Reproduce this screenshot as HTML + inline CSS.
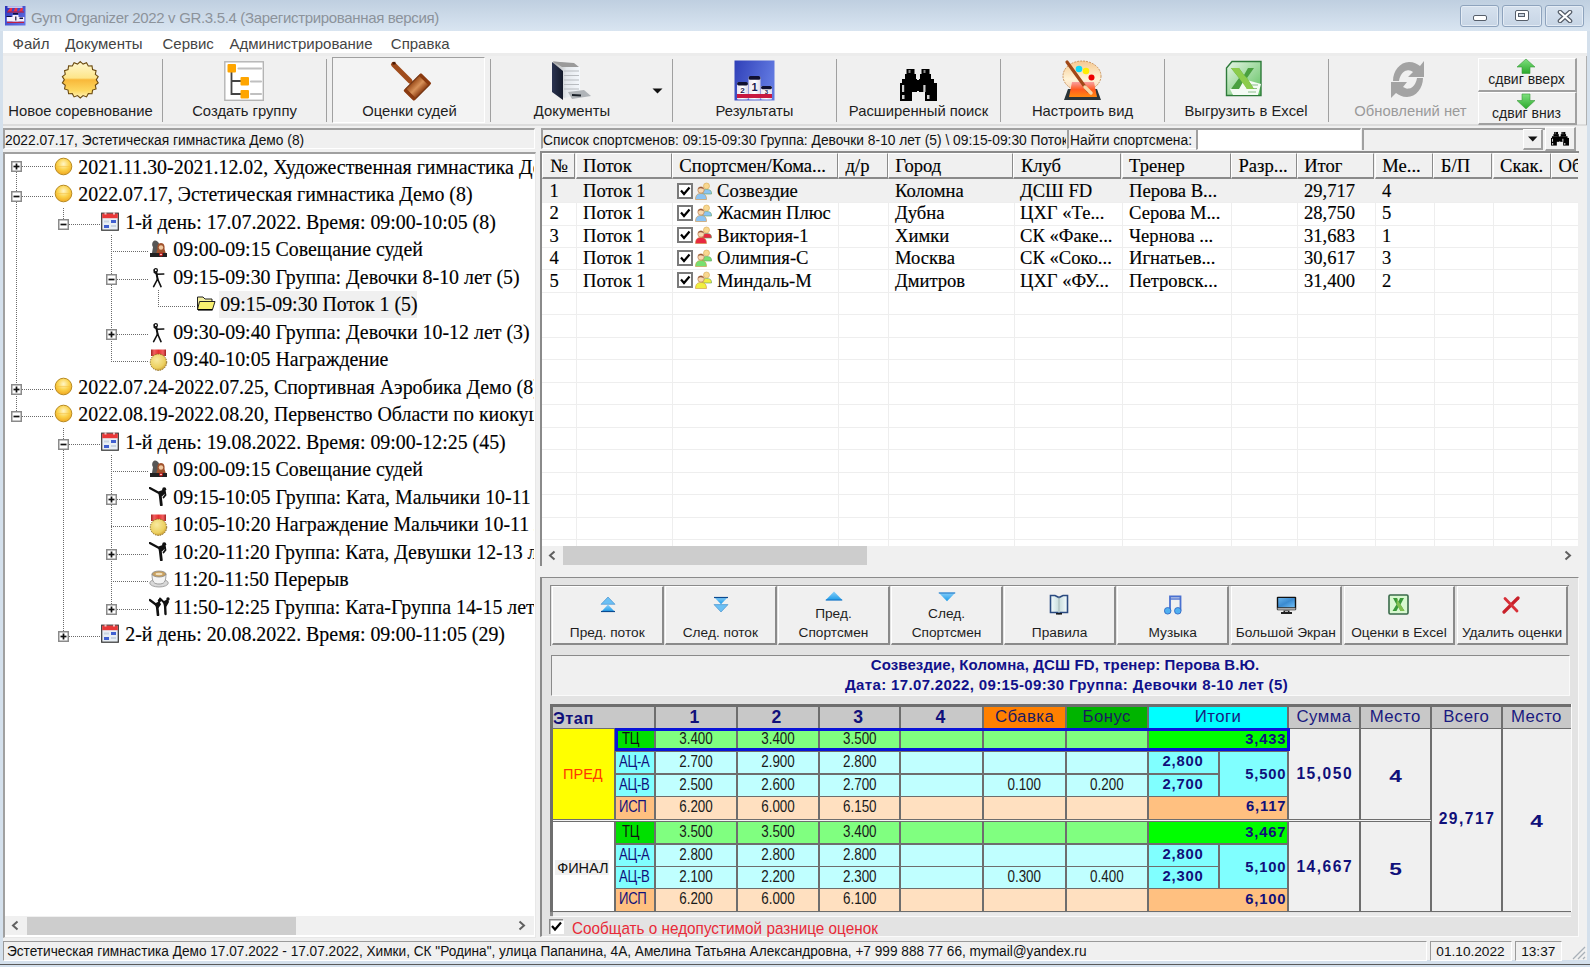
<!DOCTYPE html><html><head><meta charset="utf-8"><style>
*{margin:0;padding:0;box-sizing:border-box}
html,body{width:1590px;height:967px;overflow:hidden;background:#f0f0f0;font-family:"Liberation Sans",sans-serif;position:relative}
.a{position:absolute}
.nw{white-space:nowrap}
</style></head><body><div style="position:absolute;left:0px;top:0px;width:1590px;height:31px;background:linear-gradient(#bfcfe0,#d9e5f1)"></div>
<div style="position:absolute;left:0px;top:31px;width:3px;height:936px;background:#d4e0ec"></div>
<div style="position:absolute;left:1587px;top:31px;width:3px;height:936px;background:#d4e0ec"></div>
<div style="position:absolute;left:0px;top:960px;width:1590px;height:7px;background:#d4e0ec"></div>
<svg class="a" style="left:5px;top:6px" width="21" height="20" viewBox="0 0 21 20"><defs><linearGradient id="ti" x1="0" y1="0" x2="1" y2="1"><stop offset="0" stop-color="#2830b8"/><stop offset="1" stop-color="#6878e8"/></linearGradient></defs><rect x="0" y="0" width="20.5" height="19.5" fill="url(#ti)"/><rect x="2.5" y="0.3" width="15" height="1.5" fill="#e8e8f8"/><path d="M2.5 5.5 L5 2 H7.5 L6.5 5.5 Z M8.5 5.5 L10 2 H12.5 L12 5.5 Z M14 5.5 L16 2 H18 L17.5 5.5 Z" fill="#f03040"/><rect x="2" y="5.5" width="17" height="1" fill="#c01830"/><rect x="8" y="7" width="5" height="1.5" fill="#101040"/><rect x="1.5" y="10" width="5" height="1" fill="#101040"/><rect x="1.8" y="11" width="17.5" height="4.5" fill="#f4f0fc"/><rect x="7.5" y="9" width="6" height="6.5" fill="#f4f0fc"/><rect x="10" y="10.5" width="1.5" height="4" fill="#404060"/><rect x="14.5" y="11.5" width="3.5" height="1.5" fill="#101040"/><rect x="2" y="15.8" width="17" height="1.2" fill="#c02040"/></svg>
<div style="position:absolute;left:31px;top:9px;white-space:nowrap;font-size:15px;letter-spacing:-0.33px;color:#8c939b;line-height:17px">Gym Organizer 2022 v GR.3.5.4 (Зарегистрированная версия)</div>
<div class="a" style="left:1460px;top:5px;width:39px;height:22px;border:1px solid #8ea3bd;border-radius:3px;background:linear-gradient(#d6e1ee,#c7d5e5);box-shadow:inset 0 0 0 1px #e4ecf5"><div class="a" style="left:11.5px;top:8.5px;width:14.5px;height:6.5px;border:1.3px solid #565e6a;border-radius:2px;background:#fff"></div></div>
<div class="a" style="left:1502px;top:5px;width:40px;height:22px;border:1px solid #8ea3bd;border-radius:3px;background:linear-gradient(#d6e1ee,#c7d5e5);box-shadow:inset 0 0 0 1px #e4ecf5"><div class="a" style="left:12px;top:3.5px;width:13.5px;height:11.5px;border:1.3px solid #565e6a;border-radius:2px;background:#fff"><div class="a" style="left:2px;top:2.3px;width:7px;height:4.5px;border:1.2px solid #565e6a;background:#c8d2de"></div></div></div>
<div class="a" style="left:1545px;top:5px;width:39px;height:22px;border:1px solid #8ea3bd;border-radius:3px;background:linear-gradient(#d6e1ee,#c7d5e5);box-shadow:inset 0 0 0 1px #e4ecf5"><svg class="a" style="left:11px;top:3.5px" width="16" height="13" viewBox="0 0 16 13"><path d="M3 2 L13 11 M13 2 L3 11" stroke="#565e6a" stroke-width="4.6" stroke-linecap="round"/><path d="M3 2 L13 11 M13 2 L3 11" stroke="#fff" stroke-width="2.2" stroke-linecap="round"/></svg></div>
<div style="position:absolute;left:3px;top:31px;width:1584px;height:22px;background:#fff"></div>
<div style="position:absolute;left:3px;top:53px;width:1584px;height:3px;background:#ececec"></div>
<div style="position:absolute;left:12.5px;top:35px;white-space:nowrap;font-size:15px;color:#444;line-height:17px">Файл</div>
<div style="position:absolute;left:65.3px;top:35px;white-space:nowrap;font-size:15px;color:#444;line-height:17px">Документы</div>
<div style="position:absolute;left:162.5px;top:35px;white-space:nowrap;font-size:15px;color:#444;line-height:17px">Сервис</div>
<div style="position:absolute;left:229.5px;top:35px;white-space:nowrap;font-size:15px;color:#444;line-height:17px">Администрирование</div>
<div style="position:absolute;left:390.8px;top:35px;white-space:nowrap;font-size:15px;color:#444;line-height:17px">Справка</div>
<div style="position:absolute;left:3px;top:56px;width:1584px;height:69px;background:#f0f0f0"></div>
<div style="position:absolute;left:3px;top:124px;width:1584px;height:2px;background:#dcdcdc"></div>
<div style="position:absolute;left:1586px;top:56px;width:1px;height:69px;background:#b0b0b0"></div>
<div style="position:absolute;left:162px;top:59px;width:1px;height:63px;background:#a0a0a0"></div>
<div style="position:absolute;left:326px;top:59px;width:1px;height:63px;background:#a0a0a0"></div>
<div style="position:absolute;left:490px;top:59px;width:1px;height:63px;background:#a0a0a0"></div>
<div style="position:absolute;left:672px;top:59px;width:1px;height:63px;background:#a0a0a0"></div>
<div style="position:absolute;left:836px;top:59px;width:1px;height:63px;background:#a0a0a0"></div>
<div style="position:absolute;left:1000px;top:59px;width:1px;height:63px;background:#a0a0a0"></div>
<div style="position:absolute;left:1164px;top:59px;width:1px;height:63px;background:#a0a0a0"></div>
<div style="position:absolute;left:1328px;top:59px;width:1px;height:63px;background:#a0a0a0"></div>
<div style="position:absolute;left:332px;top:57px;width:153px;height:66px;border-top:1px solid #a0a0a0;border-left:1px solid #a0a0a0;border-right:1px solid #fff;border-bottom:1px solid #fff;background:#f3f3f3"></div>
<div class="a nw" style="left:-19.5px;top:103px;width:200px;text-align:center;font-size:14.8px;line-height:17px;color:#1e1e1e">Новое соревнование</div>
<div class="a nw" style="left:144.5px;top:103px;width:200px;text-align:center;font-size:14.8px;line-height:17px;color:#1e1e1e">Создать группу</div>
<div class="a nw" style="left:309.5px;top:103px;width:200px;text-align:center;font-size:14.8px;line-height:17px;color:#1e1e1e">Оценки судей</div>
<div class="a nw" style="left:472px;top:103px;width:200px;text-align:center;font-size:14.8px;line-height:17px;color:#1e1e1e">Документы</div>
<div class="a nw" style="left:654.5px;top:103px;width:200px;text-align:center;font-size:14.8px;line-height:17px;color:#1e1e1e">Результаты</div>
<div class="a nw" style="left:818.5px;top:103px;width:200px;text-align:center;font-size:14.8px;line-height:17px;color:#1e1e1e">Расширенный поиск</div>
<div class="a nw" style="left:982.5px;top:103px;width:200px;text-align:center;font-size:14.8px;line-height:17px;color:#1e1e1e">Настроить вид</div>
<div class="a nw" style="left:1146px;top:103px;width:200px;text-align:center;font-size:14.8px;line-height:17px;color:#1e1e1e">Выгрузить в Excel</div>
<div class="a nw" style="left:1310.5px;top:103px;width:200px;text-align:center;font-size:14.8px;line-height:17px;color:#9a9a9a">Обновлений нет</div>
<svg class="a" style="left:60px;top:60px;" width="40" height="40" viewBox="0 0 40 40"><defs><linearGradient id="sg" x1="0" y1="0" x2="0" y2="1">
<stop offset="0" stop-color="#fff8d0"/><stop offset="0.45" stop-color="#fde58a"/><stop offset="0.5" stop-color="#f8b83a"/>
<stop offset="0.8" stop-color="#fdd860"/><stop offset="1" stop-color="#fff4c0"/></linearGradient></defs>
<path d="M20.30,1.60 L23.08,4.04 L26.52,2.70 L28.30,5.94 L32.00,5.86 L32.56,9.52 L36.06,10.70 L35.34,14.33 L38.22,16.64 L36.30,19.80 L38.22,22.96 L35.34,25.27 L36.06,28.90 L32.56,30.08 L32.00,33.74 L28.30,33.66 L26.52,36.90 L23.08,35.56 L20.30,38.00 L17.52,35.56 L14.08,36.90 L12.30,33.66 L8.60,33.74 L8.04,30.08 L4.54,28.90 L5.26,25.27 L2.38,22.96 L4.30,19.80 L2.38,16.64 L5.26,14.33 L4.54,10.70 L8.04,9.52 L8.60,5.86 L12.30,5.94 L14.08,2.70 L17.52,4.04Z" fill="url(#sg)" stroke="#6b4a10" stroke-width="1.1"/></svg>
<svg class="a" style="left:224px;top:61px;" width="40" height="40" viewBox="0 0 40 40"><rect x="0.8" y="0.8" width="38.5" height="38.5" fill="#fff" stroke="#b4b4b4" stroke-width="1.4"/>
<path d="M7.5 11 V33 H17 M7.5 20 H17" stroke="#444" stroke-width="1.8" fill="none"/>
<rect x="3.5" y="3" width="8.5" height="8.5" rx="1" fill="#fea500"/>
<rect x="16.5" y="16" width="8.5" height="8.5" rx="1" fill="#fea500"/>
<rect x="16.5" y="29" width="8.5" height="8.5" rx="1" fill="#fea500"/>
<path d="M14.5 7.5 H37 M27 20.5 H37 M27 33 H37" stroke="#c0c0c0" stroke-width="2.2" stroke-linecap="round"/></svg>
<svg class="a" style="left:388px;top:60px;" width="44" height="42" viewBox="0 0 44 42"><defs><linearGradient id="gv" x1="0" y1="0" x2="0" y2="1"><stop offset="0" stop-color="#9a4a18"/><stop offset="0.5" stop-color="#d8925a"/><stop offset="1" stop-color="#8a3a10"/></linearGradient></defs>
<path d="M5.5 4.5 L22 21" stroke="#a04c1c" stroke-width="5" stroke-linecap="round"/>
<path d="M4.5 3.5 L7.5 3" stroke="#4a1a04" stroke-width="2.5"/>
<g transform="translate(29.4,27) rotate(-45)"><rect x="-11.5" y="-7" width="23" height="14" rx="2.5" fill="url(#gv)" stroke="#6a2a08" stroke-width="1"/>
<rect x="-12.5" y="-7.5" width="3.5" height="15" rx="1.2" fill="#8a3a10"/><rect x="9" y="-7.5" width="3.5" height="15" rx="1.2" fill="#8a3a10"/></g></svg>
<svg class="a" style="left:550px;top:59px;" width="42" height="42" viewBox="0 0 42 42"><defs><linearGradient id="dk" x1="0" y1="0" x2="1" y2="0"><stop offset="0" stop-color="#2a3350"/><stop offset="1" stop-color="#141a2a"/></linearGradient><linearGradient id="pp" x1="0" y1="0" x2="1" y2="0"><stop offset="0" stop-color="#a8a8a8"/><stop offset="0.5" stop-color="#e4e8ec"/><stop offset="1" stop-color="#f4f8fc"/></linearGradient></defs><path d="M3 2.5 L24 4 L30 8 L30 36 L14 39 L9 34 Z" fill="url(#pp)"/><path d="M3 2.5 L24 4 L29 8 L12 8 Z" fill="#9a9a9a"/><path d="M14 12 H29 M14 16.5 H29 M14 21 H29 M14 25.5 H29 M14 30 H29" stroke="#b8bcc0" stroke-width="1.2"/><path d="M2 3 L13 12 L13 41 L2 33 Z" fill="url(#dk)"/><path d="M18 33 L34 31 L41 37 L22 40 Z" fill="#b0b4b8"/><path d="M22 36 L31 36.5" stroke="#1a2028" stroke-width="2"/></svg>
<svg class="a" style="left:652px;top:88px;" width="11" height="6" viewBox="0 0 11 6"><path d="M0.5 0.5 H10.5 L5.5 5.5 Z" fill="#111"/></svg>
<svg class="a" style="left:734px;top:60px;" width="41" height="41" viewBox="0 0 41 41"><defs><linearGradient id="pb" x1="0" y1="0" x2="1" y2="0.3"><stop offset="0" stop-color="#3040b8"/><stop offset="1" stop-color="#6078e0"/></linearGradient>
<linearGradient id="pw" x1="0" y1="0" x2="1" y2="0"><stop offset="0" stop-color="#e8e4f0"/><stop offset="0.5" stop-color="#ffffff"/><stop offset="1" stop-color="#dcd8e8"/></linearGradient></defs>
<rect x="0.5" y="0.5" width="40" height="40" fill="url(#pb)"/>
<rect x="3" y="22.5" width="11" height="17" rx="1" fill="url(#pw)"/><rect x="3" y="22" width="11" height="3.5" rx="1.7" fill="#101030"/>
<rect x="14.5" y="16.5" width="12" height="23" rx="1" fill="url(#pw)"/><rect x="14.5" y="16" width="12" height="3.8" rx="1.9" fill="#101030"/>
<rect x="27" y="26" width="11" height="13.5" rx="1" fill="url(#pw)"/><rect x="27" y="26" width="11" height="3.2" rx="1.6" fill="#101030"/>
<rect x="3" y="34" width="35" height="4" fill="#c81840"/>
<text x="8.5" y="33" font-family="Liberation Sans" font-weight="bold" font-size="8" fill="#1a1a50" text-anchor="middle">2</text>
<text x="20.5" y="31" font-family="Liberation Sans" font-weight="bold" font-size="11" fill="#1a1a50" text-anchor="middle">1</text>
<text x="32.5" y="34" font-family="Liberation Sans" font-weight="bold" font-size="6" fill="#1a1a50" text-anchor="middle">3</text></svg>
<svg class="a" style="left:900px;top:62px;" width="37" height="40" viewBox="0 0 37 40"><g fill="#000">
<rect x="6.5" y="7" width="8" height="5"/><rect x="21.5" y="7" width="8" height="5"/>
<rect x="5" y="12" width="11" height="5"/><rect x="20" y="12" width="11" height="5"/>
<rect x="2" y="17" width="15" height="13"/><rect x="19" y="17" width="15" height="13"/>
<rect x="0" y="21" width="12" height="18"/><rect x="25" y="21" width="12" height="18"/>
<rect x="12" y="18" width="13" height="11"/></g>
<g fill="#cfcfcf"><rect x="2" y="23" width="2.2" height="7"/><rect x="23.3" y="23" width="2.2" height="7"/><rect x="2" y="33" width="2.5" height="4"/><rect x="27" y="33" width="2.5" height="4"/>
<rect x="8.5" y="8" width="2" height="3" fill="#888"/><rect x="23.5" y="8" width="2" height="3" fill="#888"/></g></svg>
<svg class="a" style="left:1061px;top:59px;" width="42" height="43" viewBox="0 0 42 43"><defs><linearGradient id="pl" x1="0" y1="0" x2="0" y2="1"><stop offset="0" stop-color="#f6c890"/><stop offset="0.6" stop-color="#fff4d8"/><stop offset="1" stop-color="#f8d0b0"/></linearGradient>
<linearGradient id="po" x1="0" y1="0" x2="0" y2="1"><stop offset="0" stop-color="#f8a0a0"/><stop offset="0.5" stop-color="#ff5a20"/><stop offset="1" stop-color="#ff8a10"/></linearGradient></defs>
<ellipse cx="21" cy="17" rx="19" ry="15" fill="url(#pl)" stroke="#c08040" stroke-width="0.8" stroke-dasharray="2 1"/>
<circle cx="18" cy="10" r="3.3" fill="#10d8f8"/><circle cx="25" cy="12" r="3.3" fill="#ffee00"/><circle cx="30.5" cy="18.5" r="3" fill="#ee0000"/>
<path d="M3 41 L7 30 H36 L40 41 Z" fill="#2a3438"/>
<path d="M8 38 L11 23 H33 L36 38 Z" fill="url(#po)"/>
<path d="M6 3 L27 32" stroke="#a04818" stroke-width="3.2" stroke-linecap="round"/>
<path d="M24 28 L30 34" stroke="#f8d8a8" stroke-width="3.5" stroke-linecap="round"/></svg>
<svg class="a" style="left:1225px;top:60px;" width="38" height="38" viewBox="0 0 38 38"><defs><linearGradient id="xg" x1="0" y1="0" x2="1" y2="1"><stop offset="0" stop-color="#e8f6e8"/><stop offset="1" stop-color="#5cc05c"/></linearGradient></defs>
<path d="M7 1.5 H36 V35.5 H1.5 V8 Z" fill="url(#xg)" stroke="#2e7a3a" stroke-width="1.4"/>
<path d="M22 20 L36 24 L33 35 L8 35 L5 29 Z" fill="#f4fbf4"/>
<path d="M25 25 H33 M24 28.5 H32 M23 32 H31" stroke="#8cc08c" stroke-width="1.2"/>
<path d="M6 8 L14 8 L19 15 L23 8 L29 8 L22 18 L29 29 L22 29 L18 22 L14 29 L6 29 L14 18 Z" fill="#4aa040"/>
<path d="M14 8 L19 15 L22 18 L29 29 L22 29 L14 18 L6 8 Z" fill="#8ccc4c"/></svg>
<svg class="a" style="left:1388px;top:59px;" width="40" height="41" viewBox="0 0 40 41"><g fill="#a3a3a3">
<path d="M5 22 C5 12 12 3 21 3 C26 3 29 5 32 7 L36 2 V18 H20 L25 13 C23 12 22 11 19 11.5 C15 12 12 16 11 22 Z"/>
<path d="M35 19 C35 29 28 38 19 38 C14 38 11 36 8 34 L3 39 V23 H19 L15 28 C17 29 18 30 21 29.5 C25 29 28 25 29 19 Z"/>
</g></svg>
<div style="position:absolute;left:1478px;top:58px;width:99px;height:34px;background:#f0f0f0;border-top:1px solid #fff;border-left:1px solid #fff;border-right:2px solid #a0a0a0;border-bottom:2px solid #a0a0a0"></div>
<div style="position:absolute;left:1478px;top:92px;width:99px;height:33px;background:#f0f0f0;border-top:1px solid #fff;border-left:1px solid #fff;border-right:2px solid #a0a0a0;border-bottom:2px solid #a0a0a0"></div>
<svg class="a" style="left:1516px;top:58px;" width="20" height="17" viewBox="0 0 20 17"><defs><linearGradient id="ga" x1="0" y1="0" x2="0" y2="1"><stop offset="0" stop-color="#7fe07f"/><stop offset="1" stop-color="#2aa82a"/></linearGradient></defs><path d="M10 1 L19 9 H14 V15.5 H6 V9 H1 Z" fill="url(#ga)" stroke="#3a9a3a" stroke-width="0.6"/></svg>
<svg class="a" style="left:1516px;top:93px;" width="20" height="17" viewBox="0 0 20 17"><defs><linearGradient id="gb" x1="0" y1="0" x2="0" y2="1"><stop offset="0" stop-color="#7fe07f"/><stop offset="1" stop-color="#2aa82a"/></linearGradient></defs><path d="M6 1 H14 V7.5 H19 L10 16 L1 7.5 H6 Z" fill="url(#gb)" stroke="#3a9a3a" stroke-width="0.6"/></svg>
<div style="position:absolute;left:1478px;top:71px;white-space:nowrap;font-size:14px;color:#1e1e1e;line-height:16px"><div style="width:97px;text-align:center">сдвиг вверх</div></div>
<div style="position:absolute;left:1478px;top:105px;white-space:nowrap;font-size:14px;color:#1e1e1e;line-height:16px"><div style="width:97px;text-align:center">сдвиг вниз</div></div>
<div class="a" style="left:3px;top:127.5px;width:532px;height:21px;background:#f0f0f0;border-top:2px solid #a0a0a0;border-left:2px solid #a0a0a0;border-right:1px solid #fff;border-bottom:1px solid #fff;"></div>
<div class="a nw" style="left:5px;top:130.55px;height:19px;line-height:19px;font-size:13.8px;font-family:'Liberation Sans', sans-serif;color:#111;transform:scaleY(1.08);transform-origin:0 80%">2022.07.17, Эстетическая гимнастика Демо (8)</div>
<div style="position:absolute;left:3px;top:151.5px;width:533px;height:786px;background:#fff;border-top:2px solid #a0a0a0;border-left:2px solid #a0a0a0;border-right:1px solid #e8e8e8;border-bottom:1px solid #e8e8e8;overflow:hidden"></div>
<div class="a" style="left:5px;top:153.5px;width:529px;height:762px;overflow:hidden">
<div class="a" style="left:11.00px;top:18.50px;width:1px;height:244.00px;background:repeating-linear-gradient(#6a6a6a 0 1px,transparent 1px 2px)"></div>
<div class="a" style="left:58.00px;top:54.50px;width:1px;height:16.00px;background:repeating-linear-gradient(#6a6a6a 0 1px,transparent 1px 2px)"></div>
<div class="a" style="left:58.00px;top:274.50px;width:1px;height:208.00px;background:repeating-linear-gradient(#6a6a6a 0 1px,transparent 1px 2px)"></div>
<div class="a" style="left:106.00px;top:81.50px;width:1px;height:126.00px;background:repeating-linear-gradient(#6a6a6a 0 1px,transparent 1px 2px)"></div>
<div class="a" style="left:106.00px;top:301.50px;width:1px;height:154.00px;background:repeating-linear-gradient(#6a6a6a 0 1px,transparent 1px 2px)"></div>
<div class="a" style="left:153.00px;top:136.50px;width:1px;height:16.00px;background:repeating-linear-gradient(#6a6a6a 0 1px,transparent 1px 2px)"></div>
<div class="a" style="left:214.3px;top:137.30px;width:198px;height:27px;background:#f0f0f0"></div>
<div class="a" style="left:11.00px;top:12.50px;width:37.00px;height:1px;background:repeating-linear-gradient(90deg,#6a6a6a 0 1px,transparent 1px 2px)"></div>
<svg class="a" style="left:6.00px;top:7.50px" width="11" height="11" viewBox="0 0 11 11"><rect x="0.75" y="0.75" width="9.5" height="9.5" fill="#fff" stroke="#8a8a8a" stroke-width="1.5"/><path d="M2.5 5.5 H8.5" stroke="#111" stroke-width="1.7"/><path d="M5.5 2.5 V8.5" stroke="#111" stroke-width="1.7"/></svg>
<svg class="a" style="left:49px;top:3.3px;" width="19" height="19" viewBox="0 0 19 19"><defs><radialGradient id="ts" cx="0.5" cy="0.35" r="0.65"><stop offset="0" stop-color="#fff6c8"/><stop offset="0.55" stop-color="#fbd24a"/><stop offset="1" stop-color="#f0a820"/></radialGradient></defs><circle cx="9.5" cy="9.5" r="8.3" fill="url(#ts)" stroke="#b88a20" stroke-width="1"/><path d="M2 9.5 H17" stroke="#f6c040" stroke-width="0.8" opacity="0.6"/></svg>
<div class="a nw" style="left:73.3px;top:-0.77px;height:28px;line-height:28px;font-size:19.9px;font-family:'Liberation Serif', serif;color:#000;-webkit-text-stroke:0.15px #000">2021.11.30-2021.12.02, Художественная гимнастика Демо (12)</div>
<div class="a" style="left:11.00px;top:42.50px;width:37.00px;height:1px;background:repeating-linear-gradient(90deg,#6a6a6a 0 1px,transparent 1px 2px)"></div>
<svg class="a" style="left:6.00px;top:37.50px" width="11" height="11" viewBox="0 0 11 11"><rect x="0.75" y="0.75" width="9.5" height="9.5" fill="#fff" stroke="#8a8a8a" stroke-width="1.5"/><path d="M2.5 5.5 H8.5" stroke="#111" stroke-width="1.7"/></svg>
<svg class="a" style="left:49px;top:30.8px;" width="19" height="19" viewBox="0 0 19 19"><defs><radialGradient id="ts" cx="0.5" cy="0.35" r="0.65"><stop offset="0" stop-color="#fff6c8"/><stop offset="0.55" stop-color="#fbd24a"/><stop offset="1" stop-color="#f0a820"/></radialGradient></defs><circle cx="9.5" cy="9.5" r="8.3" fill="url(#ts)" stroke="#b88a20" stroke-width="1"/><path d="M2 9.5 H17" stroke="#f6c040" stroke-width="0.8" opacity="0.6"/></svg>
<div class="a nw" style="left:73.3px;top:26.73px;height:28px;line-height:28px;font-size:19.9px;font-family:'Liberation Serif', serif;color:#000;-webkit-text-stroke:0.15px #000">2022.07.17, Эстетическая гимнастика Демо (8)</div>
<div class="a" style="left:58.00px;top:70.50px;width:37.00px;height:1px;background:repeating-linear-gradient(90deg,#6a6a6a 0 1px,transparent 1px 2px)"></div>
<svg class="a" style="left:53.00px;top:65.50px" width="11" height="11" viewBox="0 0 11 11"><rect x="0.75" y="0.75" width="9.5" height="9.5" fill="#fff" stroke="#8a8a8a" stroke-width="1.5"/><path d="M2.5 5.5 H8.5" stroke="#111" stroke-width="1.7"/></svg>
<svg class="a" style="left:96px;top:58.3px;" width="18" height="19" viewBox="0 0 18 19"><rect x="0.7" y="1.2" width="16.6" height="17" fill="#e8eef4" stroke="#333" stroke-width="1.2"/><rect x="1.2" y="1.6" width="15.6" height="4.6" fill="#e83838"/><rect x="3.5" y="0" width="2" height="2.6" fill="#e8c0c0"/><rect x="12" y="0" width="2" height="2.6" fill="#e8c0c0"/><rect x="10" y="8" width="5" height="3" fill="#4060d0"/><rect x="3" y="13" width="5" height="3" fill="#4060d0"/><rect x="3" y="8.5" width="5" height="2" fill="#c8d4e0"/><rect x="10" y="13" width="5" height="2" fill="#c8d4e0"/></svg>
<div class="a nw" style="left:120.3px;top:54.23px;height:28px;line-height:28px;font-size:19.9px;font-family:'Liberation Serif', serif;color:#000;-webkit-text-stroke:0.15px #000">1-й день: 17.07.2022. Время: 09:00-10:05 (8)</div>
<div class="a" style="left:106.00px;top:97.50px;width:37.00px;height:1px;background:repeating-linear-gradient(90deg,#6a6a6a 0 1px,transparent 1px 2px)"></div>
<svg class="a" style="left:144px;top:85.8px;" width="19" height="19" viewBox="0 0 19 19"><path d="M6 1.5 C3 2 2.5 6 4 8 L3 14 H11 L10 8 C11 6 10 2 6 1.5Z" fill="#555"/><path d="M12 4 C9 4 8 7 8.5 10 L7 15 H17 L15.5 10 C16 7 15 4 12 4Z" fill="#a0522d"/><circle cx="12" cy="8.5" r="2.2" fill="#f0c8a0"/><path d="M1 14 H18 V18 H1Z" fill="#222"/><circle cx="12" cy="15.5" r="2" fill="#c01818"/><circle cx="12" cy="15.5" r="0.8" fill="#fff"/></svg>
<div class="a nw" style="left:168.3px;top:81.73px;height:28px;line-height:28px;font-size:19.9px;font-family:'Liberation Serif', serif;color:#000;-webkit-text-stroke:0.15px #000">09:00-09:15 Совещание судей</div>
<div class="a" style="left:106.00px;top:125.50px;width:37.00px;height:1px;background:repeating-linear-gradient(90deg,#6a6a6a 0 1px,transparent 1px 2px)"></div>
<svg class="a" style="left:101.00px;top:120.50px" width="11" height="11" viewBox="0 0 11 11"><rect x="0.75" y="0.75" width="9.5" height="9.5" fill="#fff" stroke="#8a8a8a" stroke-width="1.5"/><path d="M2.5 5.5 H8.5" stroke="#111" stroke-width="1.7"/></svg>
<svg class="a" style="left:144px;top:113.3px;" width="19" height="21" viewBox="0 0 19 21"><g stroke="#111" fill="none" stroke-linecap="round" stroke-linejoin="round"><circle cx="6.8" cy="3.3" r="1.6" stroke-width="1.3"/><path d="M7.3 5.3 L8.6 12.2" stroke-width="2"/><path d="M7.6 7.3 L14.8 7" stroke-width="1.5"/><path d="M7.4 6.6 L5.2 5.3 L5.3 2.5" stroke-width="1.4"/><path d="M8.6 12 L4.6 19.6 M8.6 12 L12 19.6" stroke-width="1.6"/></g></svg>
<div class="a nw" style="left:168.3px;top:109.23px;height:28px;line-height:28px;font-size:19.9px;font-family:'Liberation Serif', serif;color:#000;-webkit-text-stroke:0.15px #000">09:15-09:30 Группа: Девочки 8-10 лет (5)</div>
<div class="a" style="left:153.00px;top:152.50px;width:37.00px;height:1px;background:repeating-linear-gradient(90deg,#6a6a6a 0 1px,transparent 1px 2px)"></div>
<svg class="a" style="left:191px;top:140.8px;" width="20" height="17" viewBox="0 0 20 17"><path d="M1.5 3 H7 L9 5 H16 V15.5 H1.5 Z" fill="#f4f0a0" stroke="#222" stroke-width="1"/><path d="M3.5 7.5 H19 L16.5 15.5 H1.5 Z" fill="#f8f070" stroke="#222" stroke-width="1"/><path d="M16.5 15.8 H2" stroke="#000" stroke-width="1.6"/></svg>
<div class="a nw" style="left:215.3px;top:136.73px;height:28px;line-height:28px;font-size:19.9px;font-family:'Liberation Serif', serif;color:#000;-webkit-text-stroke:0.15px #000">09:15-09:30 Поток 1 (5)</div>
<div class="a" style="left:106.00px;top:180.50px;width:37.00px;height:1px;background:repeating-linear-gradient(90deg,#6a6a6a 0 1px,transparent 1px 2px)"></div>
<svg class="a" style="left:101.00px;top:175.50px" width="11" height="11" viewBox="0 0 11 11"><rect x="0.75" y="0.75" width="9.5" height="9.5" fill="#fff" stroke="#8a8a8a" stroke-width="1.5"/><path d="M2.5 5.5 H8.5" stroke="#111" stroke-width="1.7"/><path d="M5.5 2.5 V8.5" stroke="#111" stroke-width="1.7"/></svg>
<svg class="a" style="left:144px;top:168.3px;" width="19" height="21" viewBox="0 0 19 21"><g stroke="#111" fill="none" stroke-linecap="round" stroke-linejoin="round"><circle cx="6.8" cy="3.3" r="1.6" stroke-width="1.3"/><path d="M7.3 5.3 L8.6 12.2" stroke-width="2"/><path d="M7.6 7.3 L14.8 7" stroke-width="1.5"/><path d="M7.4 6.6 L5.2 5.3 L5.3 2.5" stroke-width="1.4"/><path d="M8.6 12 L4.6 19.6 M8.6 12 L12 19.6" stroke-width="1.6"/></g></svg>
<div class="a nw" style="left:168.3px;top:164.23px;height:28px;line-height:28px;font-size:19.9px;font-family:'Liberation Serif', serif;color:#000;-webkit-text-stroke:0.15px #000">09:30-09:40 Группа: Девочки 10-12 лет (3)</div>
<div class="a" style="left:106.00px;top:207.50px;width:37.00px;height:1px;background:repeating-linear-gradient(90deg,#6a6a6a 0 1px,transparent 1px 2px)"></div>
<svg class="a" style="left:144px;top:195.3px;" width="19" height="22" viewBox="0 0 19 22"><defs><linearGradient id="rb" x1="0" y1="0" x2="1" y2="0"><stop offset="0" stop-color="#a02020"/><stop offset="0.2" stop-color="#f06060"/><stop offset="0.5" stop-color="#e83030"/><stop offset="0.8" stop-color="#f06060"/><stop offset="1" stop-color="#a02020"/></linearGradient><radialGradient id="md" cx="0.4" cy="0.35" r="0.7"><stop offset="0" stop-color="#f8eaa0"/><stop offset="0.7" stop-color="#ecd060"/><stop offset="1" stop-color="#c89a30"/></radialGradient></defs><rect x="2" y="0.5" width="15" height="6.5" fill="url(#rb)"/><path d="M4 6.5 H15 L13 9 H6Z" fill="#f08040"/><circle cx="9.5" cy="13.2" r="8.2" fill="url(#md)" stroke="#8a6a20" stroke-width="1" stroke-dasharray="1.5 1"/></svg>
<div class="a nw" style="left:168.3px;top:191.73px;height:28px;line-height:28px;font-size:19.9px;font-family:'Liberation Serif', serif;color:#000;-webkit-text-stroke:0.15px #000">09:40-10:05 Награждение</div>
<div class="a" style="left:11.00px;top:235.50px;width:37.00px;height:1px;background:repeating-linear-gradient(90deg,#6a6a6a 0 1px,transparent 1px 2px)"></div>
<svg class="a" style="left:6.00px;top:230.50px" width="11" height="11" viewBox="0 0 11 11"><rect x="0.75" y="0.75" width="9.5" height="9.5" fill="#fff" stroke="#8a8a8a" stroke-width="1.5"/><path d="M2.5 5.5 H8.5" stroke="#111" stroke-width="1.7"/><path d="M5.5 2.5 V8.5" stroke="#111" stroke-width="1.7"/></svg>
<svg class="a" style="left:49px;top:223.3px;" width="19" height="19" viewBox="0 0 19 19"><defs><radialGradient id="ts" cx="0.5" cy="0.35" r="0.65"><stop offset="0" stop-color="#fff6c8"/><stop offset="0.55" stop-color="#fbd24a"/><stop offset="1" stop-color="#f0a820"/></radialGradient></defs><circle cx="9.5" cy="9.5" r="8.3" fill="url(#ts)" stroke="#b88a20" stroke-width="1"/><path d="M2 9.5 H17" stroke="#f6c040" stroke-width="0.8" opacity="0.6"/></svg>
<div class="a nw" style="left:73.3px;top:219.23px;height:28px;line-height:28px;font-size:19.9px;font-family:'Liberation Serif', serif;color:#000;-webkit-text-stroke:0.15px #000">2022.07.24-2022.07.25, Спортивная Аэробика Демо (8)</div>
<div class="a" style="left:11.00px;top:262.50px;width:37.00px;height:1px;background:repeating-linear-gradient(90deg,#6a6a6a 0 1px,transparent 1px 2px)"></div>
<svg class="a" style="left:6.00px;top:257.50px" width="11" height="11" viewBox="0 0 11 11"><rect x="0.75" y="0.75" width="9.5" height="9.5" fill="#fff" stroke="#8a8a8a" stroke-width="1.5"/><path d="M2.5 5.5 H8.5" stroke="#111" stroke-width="1.7"/></svg>
<svg class="a" style="left:49px;top:250.8px;" width="19" height="19" viewBox="0 0 19 19"><defs><radialGradient id="ts" cx="0.5" cy="0.35" r="0.65"><stop offset="0" stop-color="#fff6c8"/><stop offset="0.55" stop-color="#fbd24a"/><stop offset="1" stop-color="#f0a820"/></radialGradient></defs><circle cx="9.5" cy="9.5" r="8.3" fill="url(#ts)" stroke="#b88a20" stroke-width="1"/><path d="M2 9.5 H17" stroke="#f6c040" stroke-width="0.8" opacity="0.6"/></svg>
<div class="a nw" style="left:73.3px;top:246.73px;height:28px;line-height:28px;font-size:19.9px;font-family:'Liberation Serif', serif;color:#000;-webkit-text-stroke:0.15px #000">2022.08.19-2022.08.20, Первенство Области по киокушинкай (45)</div>
<div class="a" style="left:58.00px;top:290.50px;width:37.00px;height:1px;background:repeating-linear-gradient(90deg,#6a6a6a 0 1px,transparent 1px 2px)"></div>
<svg class="a" style="left:53.00px;top:285.50px" width="11" height="11" viewBox="0 0 11 11"><rect x="0.75" y="0.75" width="9.5" height="9.5" fill="#fff" stroke="#8a8a8a" stroke-width="1.5"/><path d="M2.5 5.5 H8.5" stroke="#111" stroke-width="1.7"/></svg>
<svg class="a" style="left:96px;top:278.3px;" width="18" height="19" viewBox="0 0 18 19"><rect x="0.7" y="1.2" width="16.6" height="17" fill="#e8eef4" stroke="#333" stroke-width="1.2"/><rect x="1.2" y="1.6" width="15.6" height="4.6" fill="#e83838"/><rect x="3.5" y="0" width="2" height="2.6" fill="#e8c0c0"/><rect x="12" y="0" width="2" height="2.6" fill="#e8c0c0"/><rect x="10" y="8" width="5" height="3" fill="#4060d0"/><rect x="3" y="13" width="5" height="3" fill="#4060d0"/><rect x="3" y="8.5" width="5" height="2" fill="#c8d4e0"/><rect x="10" y="13" width="5" height="2" fill="#c8d4e0"/></svg>
<div class="a nw" style="left:120.3px;top:274.23px;height:28px;line-height:28px;font-size:19.9px;font-family:'Liberation Serif', serif;color:#000;-webkit-text-stroke:0.15px #000">1-й день: 19.08.2022. Время: 09:00-12:25 (45)</div>
<div class="a" style="left:106.00px;top:317.50px;width:37.00px;height:1px;background:repeating-linear-gradient(90deg,#6a6a6a 0 1px,transparent 1px 2px)"></div>
<svg class="a" style="left:144px;top:305.8px;" width="19" height="19" viewBox="0 0 19 19"><path d="M6 1.5 C3 2 2.5 6 4 8 L3 14 H11 L10 8 C11 6 10 2 6 1.5Z" fill="#555"/><path d="M12 4 C9 4 8 7 8.5 10 L7 15 H17 L15.5 10 C16 7 15 4 12 4Z" fill="#a0522d"/><circle cx="12" cy="8.5" r="2.2" fill="#f0c8a0"/><path d="M1 14 H18 V18 H1Z" fill="#222"/><circle cx="12" cy="15.5" r="2" fill="#c01818"/><circle cx="12" cy="15.5" r="0.8" fill="#fff"/></svg>
<div class="a nw" style="left:168.3px;top:301.73px;height:28px;line-height:28px;font-size:19.9px;font-family:'Liberation Serif', serif;color:#000;-webkit-text-stroke:0.15px #000">09:00-09:15 Совещание судей</div>
<div class="a" style="left:106.00px;top:345.50px;width:37.00px;height:1px;background:repeating-linear-gradient(90deg,#6a6a6a 0 1px,transparent 1px 2px)"></div>
<svg class="a" style="left:101.00px;top:340.50px" width="11" height="11" viewBox="0 0 11 11"><rect x="0.75" y="0.75" width="9.5" height="9.5" fill="#fff" stroke="#8a8a8a" stroke-width="1.5"/><path d="M2.5 5.5 H8.5" stroke="#111" stroke-width="1.7"/><path d="M5.5 2.5 V8.5" stroke="#111" stroke-width="1.7"/></svg>
<svg class="a" style="left:144px;top:333.3px;" width="19" height="19" viewBox="0 0 19 19"><g stroke="#111" stroke-linecap="round" fill="none"><path d="M0.8 1 L11 6.5" stroke-width="2.2"/><path d="M11 6.5 L12.3 17.8" stroke-width="2.8"/><path d="M15.8 4.5 L16.5 8 L14.5 10.5" stroke-width="1.8"/></g><path d="M9.5 4.5 L15 2.5 L17 5.5 L13 9.5 L10 9 Z" fill="#111"/><circle cx="15.2" cy="2.3" r="2" fill="#111"/></svg>
<div class="a nw" style="left:168.3px;top:329.23px;height:28px;line-height:28px;font-size:19.9px;font-family:'Liberation Serif', serif;color:#000;-webkit-text-stroke:0.15px #000">09:15-10:05 Группа: Ката, Мальчики 10-11 лет (10)</div>
<div class="a" style="left:106.00px;top:372.50px;width:37.00px;height:1px;background:repeating-linear-gradient(90deg,#6a6a6a 0 1px,transparent 1px 2px)"></div>
<svg class="a" style="left:144px;top:360.3px;" width="19" height="22" viewBox="0 0 19 22"><defs><linearGradient id="rb" x1="0" y1="0" x2="1" y2="0"><stop offset="0" stop-color="#a02020"/><stop offset="0.2" stop-color="#f06060"/><stop offset="0.5" stop-color="#e83030"/><stop offset="0.8" stop-color="#f06060"/><stop offset="1" stop-color="#a02020"/></linearGradient><radialGradient id="md" cx="0.4" cy="0.35" r="0.7"><stop offset="0" stop-color="#f8eaa0"/><stop offset="0.7" stop-color="#ecd060"/><stop offset="1" stop-color="#c89a30"/></radialGradient></defs><rect x="2" y="0.5" width="15" height="6.5" fill="url(#rb)"/><path d="M4 6.5 H15 L13 9 H6Z" fill="#f08040"/><circle cx="9.5" cy="13.2" r="8.2" fill="url(#md)" stroke="#8a6a20" stroke-width="1" stroke-dasharray="1.5 1"/></svg>
<div class="a nw" style="left:168.3px;top:356.73px;height:28px;line-height:28px;font-size:19.9px;font-family:'Liberation Serif', serif;color:#000;-webkit-text-stroke:0.15px #000">10:05-10:20 Награждение Мальчики 10-11 лет</div>
<div class="a" style="left:106.00px;top:400.50px;width:37.00px;height:1px;background:repeating-linear-gradient(90deg,#6a6a6a 0 1px,transparent 1px 2px)"></div>
<svg class="a" style="left:101.00px;top:395.50px" width="11" height="11" viewBox="0 0 11 11"><rect x="0.75" y="0.75" width="9.5" height="9.5" fill="#fff" stroke="#8a8a8a" stroke-width="1.5"/><path d="M2.5 5.5 H8.5" stroke="#111" stroke-width="1.7"/><path d="M5.5 2.5 V8.5" stroke="#111" stroke-width="1.7"/></svg>
<svg class="a" style="left:144px;top:388.3px;" width="19" height="19" viewBox="0 0 19 19"><g stroke="#111" stroke-linecap="round" fill="none"><path d="M0.8 1 L11 6.5" stroke-width="2.2"/><path d="M11 6.5 L12.3 17.8" stroke-width="2.8"/><path d="M15.8 4.5 L16.5 8 L14.5 10.5" stroke-width="1.8"/></g><path d="M9.5 4.5 L15 2.5 L17 5.5 L13 9.5 L10 9 Z" fill="#111"/><circle cx="15.2" cy="2.3" r="2" fill="#111"/></svg>
<div class="a nw" style="left:168.3px;top:384.23px;height:28px;line-height:28px;font-size:19.9px;font-family:'Liberation Serif', serif;color:#000;-webkit-text-stroke:0.15px #000">10:20-11:20 Группа: Ката, Девушки 12-13 лет (12)</div>
<div class="a" style="left:106.00px;top:427.50px;width:37.00px;height:1px;background:repeating-linear-gradient(90deg,#6a6a6a 0 1px,transparent 1px 2px)"></div>
<svg class="a" style="left:144px;top:415.8px;" width="20" height="19" viewBox="0 0 20 19"><ellipse cx="10" cy="14" rx="9.3" ry="4" fill="#d8d8d8" stroke="#909090" stroke-width="0.8"/><path d="M3 5 C3 13 5 15 10 15 C15 15 17 13 17 5 Z" fill="#f4f4f4" stroke="#888" stroke-width="0.8"/><ellipse cx="10" cy="5" rx="7" ry="3" fill="#c8a060" stroke="#888" stroke-width="0.8"/><ellipse cx="10" cy="5" rx="3.5" ry="1.2" fill="#f0e0c0"/></svg>
<div class="a nw" style="left:168.3px;top:411.73px;height:28px;line-height:28px;font-size:19.9px;font-family:'Liberation Serif', serif;color:#000;-webkit-text-stroke:0.15px #000">11:20-11:50 Перерыв</div>
<div class="a" style="left:106.00px;top:455.50px;width:37.00px;height:1px;background:repeating-linear-gradient(90deg,#6a6a6a 0 1px,transparent 1px 2px)"></div>
<svg class="a" style="left:101.00px;top:450.50px" width="11" height="11" viewBox="0 0 11 11"><rect x="0.75" y="0.75" width="9.5" height="9.5" fill="#fff" stroke="#8a8a8a" stroke-width="1.5"/><path d="M2.5 5.5 H8.5" stroke="#111" stroke-width="1.7"/><path d="M5.5 2.5 V8.5" stroke="#111" stroke-width="1.7"/></svg>
<svg class="a" style="left:144px;top:443.3px;" width="21" height="19" viewBox="0 0 21 19"><g stroke="#111" stroke-linecap="round" fill="none"><path d="M0.8 3 L7.5 8" stroke-width="2.2"/><path d="M8 8 L9 18" stroke-width="2.6"/><path d="M11 1.5 L16 6.5" stroke-width="2"/><path d="M16 6.5 L16.5 17" stroke-width="2.4"/></g><path d="M6 6.5 L10.5 4 L12 7.5 L9.5 11 L7 10.5Z M14 4.5 L19 2 L20 5 L17.5 9.5 L15 9Z" fill="#111"/><circle cx="10.5" cy="3.5" r="1.7" fill="#111"/><circle cx="19" cy="2" r="1.7" fill="#111"/></svg>
<div class="a nw" style="left:168.3px;top:439.23px;height:28px;line-height:28px;font-size:19.9px;font-family:'Liberation Serif', serif;color:#000;-webkit-text-stroke:0.15px #000">11:50-12:25 Группа: Ката-Группа 14-15 лет (5)</div>
<div class="a" style="left:58.00px;top:482.50px;width:37.00px;height:1px;background:repeating-linear-gradient(90deg,#6a6a6a 0 1px,transparent 1px 2px)"></div>
<svg class="a" style="left:53.00px;top:477.50px" width="11" height="11" viewBox="0 0 11 11"><rect x="0.75" y="0.75" width="9.5" height="9.5" fill="#fff" stroke="#8a8a8a" stroke-width="1.5"/><path d="M2.5 5.5 H8.5" stroke="#111" stroke-width="1.7"/><path d="M5.5 2.5 V8.5" stroke="#111" stroke-width="1.7"/></svg>
<svg class="a" style="left:96px;top:470.8px;" width="18" height="19" viewBox="0 0 18 19"><rect x="0.7" y="1.2" width="16.6" height="17" fill="#e8eef4" stroke="#333" stroke-width="1.2"/><rect x="1.2" y="1.6" width="15.6" height="4.6" fill="#e83838"/><rect x="3.5" y="0" width="2" height="2.6" fill="#e8c0c0"/><rect x="12" y="0" width="2" height="2.6" fill="#e8c0c0"/><rect x="10" y="8" width="5" height="3" fill="#4060d0"/><rect x="3" y="13" width="5" height="3" fill="#4060d0"/><rect x="3" y="8.5" width="5" height="2" fill="#c8d4e0"/><rect x="10" y="13" width="5" height="2" fill="#c8d4e0"/></svg>
<div class="a nw" style="left:120.3px;top:466.73px;height:28px;line-height:28px;font-size:19.9px;font-family:'Liberation Serif', serif;color:#000;-webkit-text-stroke:0.15px #000">2-й день: 20.08.2022. Время: 09:00-11:05 (29)</div>
</div>
<div style="position:absolute;left:5px;top:916px;width:529px;height:19px;background:#f0f0f0"></div>
<div style="position:absolute;left:27px;top:916.5px;width:268.5px;height:18px;background:#cdcdcd"></div>
<svg class="a" style="left:10px;top:920px;" width="10" height="11" viewBox="0 0 10 11"><path d="M7.5 1.5 L3 5.5 L7.5 9.5" stroke="#606060" stroke-width="2" fill="none"/></svg>
<svg class="a" style="left:517px;top:920px;" width="10" height="11" viewBox="0 0 10 11"><path d="M2.5 1.5 L7 5.5 L2.5 9.5" stroke="#606060" stroke-width="2" fill="none"/></svg>
<div class="a" style="left:541px;top:127.5px;width:527px;height:21px;background:#f0f0f0;border-top:2px solid #a0a0a0;border-left:2px solid #a0a0a0;border-right:1px solid #fff;border-bottom:1px solid #fff;"></div>
<div class="a" style="left:543px;top:129.5px;width:523px;height:18px;overflow:hidden">
<div class="a nw" style="left:0px;top:1.05px;height:19px;line-height:19px;font-size:13.8px;font-family:'Liberation Sans', sans-serif;color:#111;transform:scaleY(1.08);transform-origin:0 80%">Список спортсменов: 09:15-09:30 Группа: Девочки 8-10 лет (5) \ 09:15-09:30 Поток 1 (5)</div>
</div>
<div class="a" style="left:1067px;top:127.5px;width:130px;height:21px;background:#f0f0f0;border-top:2px solid #a0a0a0;border-left:2px solid #a0a0a0;border-right:1px solid #fff;border-bottom:1px solid #fff;"></div>
<div class="a nw" style="left:1070px;top:130.55px;height:19px;line-height:19px;font-size:13.8px;font-family:'Liberation Sans', sans-serif;color:#111;transform:scaleY(1.08);transform-origin:0 80%">Найти спортсмена:</div>
<div style="position:absolute;left:1196px;top:127.5px;width:165px;height:22px;background:#fff;border-top:2px solid #a0a0a0;border-left:2px solid #a0a0a0;border-right:1px solid #fff;border-bottom:1px solid #fff"></div>
<div style="position:absolute;left:1362px;top:127.5px;width:183px;height:22px;background:#f0f0f0;border-top:2px solid #a0a0a0;border-left:2px solid #a0a0a0"></div>
<div style="position:absolute;left:1523px;top:128.5px;width:20px;height:21px;background:#f0f0f0;border-right:2px solid #a0a0a0;border-bottom:2px solid #a0a0a0;border-left:1px solid #fff;border-top:1px solid #fff"></div>
<svg class="a" style="left:1528px;top:136px;" width="10" height="6" viewBox="0 0 10 6"><path d="M0 0.5 H9.5 L4.75 5.5Z" fill="#111"/></svg>
<div style="position:absolute;left:1545px;top:126.5px;width:31px;height:24px;background:#f0f0f0;border-right:2px solid #a0a0a0;border-bottom:2px solid #a0a0a0;border-left:1px solid #fff;border-top:1px solid #fff"></div>
<svg class="a" style="left:1550.5px;top:128.5px;" width="18" height="17" viewBox="0 0 18 17"><g transform="scale(0.486,0.425)"><g fill="#000">
<rect x="6.5" y="7" width="8" height="5"/><rect x="21.5" y="7" width="8" height="5"/>
<rect x="5" y="12" width="11" height="5"/><rect x="20" y="12" width="11" height="5"/>
<rect x="2" y="17" width="15" height="13"/><rect x="19" y="17" width="15" height="13"/>
<rect x="0" y="21" width="12" height="18"/><rect x="25" y="21" width="12" height="18"/>
<rect x="12" y="18" width="13" height="11"/></g>
<g fill="#cfcfcf"><rect x="2" y="23" width="2.2" height="7"/><rect x="23.3" y="23" width="2.2" height="7"/><rect x="2" y="33" width="2.5" height="4"/><rect x="27" y="33" width="2.5" height="4"/>
<rect x="8.5" y="8" width="2" height="3" fill="#888"/><rect x="23.5" y="8" width="2" height="3" fill="#888"/></g></g></svg>
<div style="position:absolute;left:539.5px;top:150.5px;width:1039.0px;height:415.79999999999995px;background:#f0f0f0;border-top:2.4px solid #8a8a8a;border-left:2px solid #8a8a8a"></div>
<div style="position:absolute;left:541.5px;top:179px;width:1036px;height:366.5px;background:#fff"></div>
<div class="a" style="left:541.5px;top:153px;width:1036px;height:392.5px;overflow:hidden">
<div class="a" style="left:0;top:26px;width:1036px;height:23.5px;background:#f0f0f0"></div>
<div class="a" style="left:0;top:49.07px;width:1036px;height:1px;background:#eeeeee"></div>
<div class="a" style="left:0;top:71.54px;width:1036px;height:1px;background:#eeeeee"></div>
<div class="a" style="left:0;top:94.01px;width:1036px;height:1px;background:#eeeeee"></div>
<div class="a" style="left:0;top:116.48px;width:1036px;height:1px;background:#eeeeee"></div>
<div class="a" style="left:0;top:138.95px;width:1036px;height:1px;background:#eeeeee"></div>
<div class="a" style="left:0;top:161.42px;width:1036px;height:1px;background:#eeeeee"></div>
<div class="a" style="left:0;top:183.89px;width:1036px;height:1px;background:#eeeeee"></div>
<div class="a" style="left:0;top:206.36px;width:1036px;height:1px;background:#eeeeee"></div>
<div class="a" style="left:0;top:228.83px;width:1036px;height:1px;background:#eeeeee"></div>
<div class="a" style="left:0;top:251.30px;width:1036px;height:1px;background:#eeeeee"></div>
<div class="a" style="left:0;top:273.77px;width:1036px;height:1px;background:#eeeeee"></div>
<div class="a" style="left:0;top:296.24px;width:1036px;height:1px;background:#eeeeee"></div>
<div class="a" style="left:0;top:318.71px;width:1036px;height:1px;background:#eeeeee"></div>
<div class="a" style="left:0;top:341.18px;width:1036px;height:1px;background:#eeeeee"></div>
<div class="a" style="left:0;top:363.65px;width:1036px;height:1px;background:#eeeeee"></div>
<div class="a" style="left:0;top:386.12px;width:1036px;height:1px;background:#eeeeee"></div>
<div class="a" style="left:34.30px;top:49px;width:1px;height:400px;background:#eeeeee"></div>
<div class="a" style="left:130.60px;top:49px;width:1px;height:400px;background:#eeeeee"></div>
<div class="a" style="left:296.80px;top:49px;width:1px;height:400px;background:#eeeeee"></div>
<div class="a" style="left:346.60px;top:49px;width:1px;height:400px;background:#eeeeee"></div>
<div class="a" style="left:472.20px;top:49px;width:1px;height:400px;background:#eeeeee"></div>
<div class="a" style="left:580.40px;top:49px;width:1px;height:400px;background:#eeeeee"></div>
<div class="a" style="left:689.80px;top:49px;width:1px;height:400px;background:#eeeeee"></div>
<div class="a" style="left:755.50px;top:49px;width:1px;height:400px;background:#eeeeee"></div>
<div class="a" style="left:833.50px;top:49px;width:1px;height:400px;background:#eeeeee"></div>
<div class="a" style="left:892.10px;top:49px;width:1px;height:400px;background:#eeeeee"></div>
<div class="a" style="left:951.40px;top:49px;width:1px;height:400px;background:#eeeeee"></div>
<div class="a" style="left:1009.80px;top:49px;width:1px;height:400px;background:#eeeeee"></div>
<div class="a" style="left:0.00px;top:0;width:33.80px;height:26px;background:#f0f0f0;border-top:1px solid #fff;border-left:1px solid #fff;border-right:1.7px solid #8a8a8a;border-bottom:2.4px solid #8a8a8a"></div>
<div class="a nw" style="left:8.5px;top:-0.14px;height:26px;line-height:26px;font-size:18.6px;font-family:'Liberation Serif', serif;color:#000;-webkit-text-stroke:0.15px #000">№</div>
<div class="a" style="left:34.00px;top:0;width:96.10px;height:26px;background:#f0f0f0;border-top:1px solid #fff;border-left:1px solid #fff;border-right:1.7px solid #8a8a8a;border-bottom:2.4px solid #8a8a8a"></div>
<div class="a nw" style="left:41.5px;top:-0.14px;height:26px;line-height:26px;font-size:18.6px;font-family:'Liberation Serif', serif;color:#000;-webkit-text-stroke:0.15px #000">Поток</div>
<div class="a" style="left:130.30px;top:0;width:166.00px;height:26px;background:#f0f0f0;border-top:1px solid #fff;border-left:1px solid #fff;border-right:1.7px solid #8a8a8a;border-bottom:2.4px solid #8a8a8a"></div>
<div class="a nw" style="left:137.79999999999995px;top:-0.14px;height:26px;line-height:26px;font-size:18.6px;font-family:'Liberation Serif', serif;color:#000;-webkit-text-stroke:0.15px #000">Спортсмен/Кома...</div>
<div class="a" style="left:296.50px;top:0;width:49.60px;height:26px;background:#f0f0f0;border-top:1px solid #fff;border-left:1px solid #fff;border-right:1.7px solid #8a8a8a;border-bottom:2.4px solid #8a8a8a"></div>
<div class="a nw" style="left:304.0px;top:-0.14px;height:26px;line-height:26px;font-size:18.6px;font-family:'Liberation Serif', serif;color:#000;-webkit-text-stroke:0.15px #000">д/р</div>
<div class="a" style="left:346.30px;top:0;width:125.40px;height:26px;background:#f0f0f0;border-top:1px solid #fff;border-left:1px solid #fff;border-right:1.7px solid #8a8a8a;border-bottom:2.4px solid #8a8a8a"></div>
<div class="a nw" style="left:353.79999999999995px;top:-0.14px;height:26px;line-height:26px;font-size:18.6px;font-family:'Liberation Serif', serif;color:#000;-webkit-text-stroke:0.15px #000">Город</div>
<div class="a" style="left:471.90px;top:0;width:108.00px;height:26px;background:#f0f0f0;border-top:1px solid #fff;border-left:1px solid #fff;border-right:1.7px solid #8a8a8a;border-bottom:2.4px solid #8a8a8a"></div>
<div class="a nw" style="left:479.4px;top:-0.14px;height:26px;line-height:26px;font-size:18.6px;font-family:'Liberation Serif', serif;color:#000;-webkit-text-stroke:0.15px #000">Клуб</div>
<div class="a" style="left:580.10px;top:0;width:109.20px;height:26px;background:#f0f0f0;border-top:1px solid #fff;border-left:1px solid #fff;border-right:1.7px solid #8a8a8a;border-bottom:2.4px solid #8a8a8a"></div>
<div class="a nw" style="left:587.5999999999999px;top:-0.14px;height:26px;line-height:26px;font-size:18.6px;font-family:'Liberation Serif', serif;color:#000;-webkit-text-stroke:0.15px #000">Тренер</div>
<div class="a" style="left:689.50px;top:0;width:65.50px;height:26px;background:#f0f0f0;border-top:1px solid #fff;border-left:1px solid #fff;border-right:1.7px solid #8a8a8a;border-bottom:2.4px solid #8a8a8a"></div>
<div class="a nw" style="left:697.0px;top:-0.14px;height:26px;line-height:26px;font-size:18.6px;font-family:'Liberation Serif', serif;color:#000;-webkit-text-stroke:0.15px #000">Разр...</div>
<div class="a" style="left:755.20px;top:0;width:77.80px;height:26px;background:#f0f0f0;border-top:1px solid #fff;border-left:1px solid #fff;border-right:1.7px solid #8a8a8a;border-bottom:2.4px solid #8a8a8a"></div>
<div class="a nw" style="left:762.7px;top:-0.14px;height:26px;line-height:26px;font-size:18.6px;font-family:'Liberation Serif', serif;color:#000;-webkit-text-stroke:0.15px #000">Итог</div>
<div class="a" style="left:833.20px;top:0;width:58.40px;height:26px;background:#f0f0f0;border-top:1px solid #fff;border-left:1px solid #fff;border-right:1.7px solid #8a8a8a;border-bottom:2.4px solid #8a8a8a"></div>
<div class="a nw" style="left:840.7px;top:-0.14px;height:26px;line-height:26px;font-size:18.6px;font-family:'Liberation Serif', serif;color:#000;-webkit-text-stroke:0.15px #000">Ме...</div>
<div class="a" style="left:891.80px;top:0;width:59.10px;height:26px;background:#f0f0f0;border-top:1px solid #fff;border-left:1px solid #fff;border-right:1.7px solid #8a8a8a;border-bottom:2.4px solid #8a8a8a"></div>
<div class="a nw" style="left:899.3px;top:-0.14px;height:26px;line-height:26px;font-size:18.6px;font-family:'Liberation Serif', serif;color:#000;-webkit-text-stroke:0.15px #000">Б/П</div>
<div class="a" style="left:951.10px;top:0;width:58.20px;height:26px;background:#f0f0f0;border-top:1px solid #fff;border-left:1px solid #fff;border-right:1.7px solid #8a8a8a;border-bottom:2.4px solid #8a8a8a"></div>
<div class="a nw" style="left:958.5999999999999px;top:-0.14px;height:26px;line-height:26px;font-size:18.6px;font-family:'Liberation Serif', serif;color:#000;-webkit-text-stroke:0.15px #000">Скак.</div>
<div class="a" style="left:1009.50px;top:0;width:59.80px;height:26px;background:#f0f0f0;border-top:1px solid #fff;border-left:1px solid #fff;border-right:1.7px solid #8a8a8a;border-bottom:2.4px solid #8a8a8a"></div>
<div class="a nw" style="left:1017.0px;top:-0.14px;height:26px;line-height:26px;font-size:18.6px;font-family:'Liberation Serif', serif;color:#000;-webkit-text-stroke:0.15px #000">Об</div>
<div class="a nw" style="left:8.0px;top:24.86px;height:26px;line-height:26px;font-size:18.6px;font-family:'Liberation Serif', serif;color:#000;-webkit-text-stroke:0.15px #000">1</div>
<div class="a nw" style="left:41.5px;top:24.86px;height:26px;line-height:26px;font-size:18.6px;font-family:'Liberation Serif', serif;color:#000;-webkit-text-stroke:0.15px #000">Поток 1</div>
<svg class="a" style="left:135.5px;top:29.50px" width="16" height="16" viewBox="0 0 16 16"><rect x="1" y="1" width="14" height="14" fill="#fff" stroke="#7a7a7a" stroke-width="2"/><path d="M4 7.5 L7 11 L12.5 4.5" stroke="#000" stroke-width="2.2" fill="none"/></svg>
<svg class="a" style="left:152.5px;top:27.50px" width="20" height="20" viewBox="0 0 20 20"><circle cx="12.5" cy="5" r="3" fill="#f8d890" stroke="#d8a850" stroke-width="0.6"/><path d="M8 13 C8 9 10 8.5 12.5 8.5 C15 8.5 17.5 9 17.5 12 V13Z" fill="#8cc4f4" stroke="#60a060" stroke-width="0.6"/><circle cx="7" cy="9" r="3.2" fill="#f8d8b0" stroke="#b07040" stroke-width="0.6"/><path d="M7 6 C4.5 6 4 7.5 4.5 8.5 C5 7 8 7 9.5 8 C9.5 7 9 6 7 6Z" fill="#905030"/><path d="M1.5 18.5 C1.5 14 3.5 12.5 7 12.5 C10.5 12.5 12.5 14 12.5 18.5Z" fill="#8cc4f4" stroke="#d09040" stroke-width="0.6"/></svg>
<div class="a nw" style="left:175.5px;top:24.86px;height:26px;line-height:26px;font-size:18.6px;font-family:'Liberation Serif', serif;color:#000;-webkit-text-stroke:0.15px #000">Созвездие</div>
<div class="a nw" style="left:353.5px;top:24.86px;height:26px;line-height:26px;font-size:18.6px;font-family:'Liberation Serif', serif;color:#000;-webkit-text-stroke:0.15px #000">Коломна</div>
<div class="a nw" style="left:478.5px;top:24.86px;height:26px;line-height:26px;font-size:18.6px;font-family:'Liberation Serif', serif;color:#000;-webkit-text-stroke:0.15px #000">ДСШ FD</div>
<div class="a nw" style="left:587.5px;top:24.86px;height:26px;line-height:26px;font-size:18.6px;font-family:'Liberation Serif', serif;color:#000;-webkit-text-stroke:0.15px #000">Перова В...</div>
<div class="a nw" style="left:762.5px;top:24.86px;height:26px;line-height:26px;font-size:18.6px;font-family:'Liberation Serif', serif;color:#000;-webkit-text-stroke:0.15px #000">29,717</div>
<div class="a nw" style="left:840.5px;top:24.86px;height:26px;line-height:26px;font-size:18.6px;font-family:'Liberation Serif', serif;color:#000;-webkit-text-stroke:0.15px #000">4</div>
<div class="a nw" style="left:8.0px;top:47.28px;height:26px;line-height:26px;font-size:18.6px;font-family:'Liberation Serif', serif;color:#000;-webkit-text-stroke:0.15px #000">2</div>
<div class="a nw" style="left:41.5px;top:47.28px;height:26px;line-height:26px;font-size:18.6px;font-family:'Liberation Serif', serif;color:#000;-webkit-text-stroke:0.15px #000">Поток 1</div>
<svg class="a" style="left:135.5px;top:51.92px" width="16" height="16" viewBox="0 0 16 16"><rect x="1" y="1" width="14" height="14" fill="#fff" stroke="#7a7a7a" stroke-width="2"/><path d="M4 7.5 L7 11 L12.5 4.5" stroke="#000" stroke-width="2.2" fill="none"/></svg>
<svg class="a" style="left:152.5px;top:49.92px" width="20" height="20" viewBox="0 0 20 20"><circle cx="12.5" cy="5" r="3" fill="#f8d890" stroke="#d8a850" stroke-width="0.6"/><path d="M8 13 C8 9 10 8.5 12.5 8.5 C15 8.5 17.5 9 17.5 12 V13Z" fill="#8cc4f4" stroke="#60a060" stroke-width="0.6"/><circle cx="7" cy="9" r="3.2" fill="#f8d8b0" stroke="#b07040" stroke-width="0.6"/><path d="M7 6 C4.5 6 4 7.5 4.5 8.5 C5 7 8 7 9.5 8 C9.5 7 9 6 7 6Z" fill="#905030"/><path d="M1.5 18.5 C1.5 14 3.5 12.5 7 12.5 C10.5 12.5 12.5 14 12.5 18.5Z" fill="#8cc4f4" stroke="#d09040" stroke-width="0.6"/></svg>
<div class="a nw" style="left:175.5px;top:47.28px;height:26px;line-height:26px;font-size:18.6px;font-family:'Liberation Serif', serif;color:#000;-webkit-text-stroke:0.15px #000">Жасмин Плюс</div>
<div class="a nw" style="left:353.5px;top:47.28px;height:26px;line-height:26px;font-size:18.6px;font-family:'Liberation Serif', serif;color:#000;-webkit-text-stroke:0.15px #000">Дубна</div>
<div class="a nw" style="left:478.5px;top:47.28px;height:26px;line-height:26px;font-size:18.6px;font-family:'Liberation Serif', serif;color:#000;-webkit-text-stroke:0.15px #000">ЦХГ «Те...</div>
<div class="a nw" style="left:587.5px;top:47.28px;height:26px;line-height:26px;font-size:18.6px;font-family:'Liberation Serif', serif;color:#000;-webkit-text-stroke:0.15px #000">Серова М...</div>
<div class="a nw" style="left:762.5px;top:47.28px;height:26px;line-height:26px;font-size:18.6px;font-family:'Liberation Serif', serif;color:#000;-webkit-text-stroke:0.15px #000">28,750</div>
<div class="a nw" style="left:840.5px;top:47.28px;height:26px;line-height:26px;font-size:18.6px;font-family:'Liberation Serif', serif;color:#000;-webkit-text-stroke:0.15px #000">5</div>
<div class="a nw" style="left:8.0px;top:69.70px;height:26px;line-height:26px;font-size:18.6px;font-family:'Liberation Serif', serif;color:#000;-webkit-text-stroke:0.15px #000">3</div>
<div class="a nw" style="left:41.5px;top:69.70px;height:26px;line-height:26px;font-size:18.6px;font-family:'Liberation Serif', serif;color:#000;-webkit-text-stroke:0.15px #000">Поток 1</div>
<svg class="a" style="left:135.5px;top:74.34px" width="16" height="16" viewBox="0 0 16 16"><rect x="1" y="1" width="14" height="14" fill="#fff" stroke="#7a7a7a" stroke-width="2"/><path d="M4 7.5 L7 11 L12.5 4.5" stroke="#000" stroke-width="2.2" fill="none"/></svg>
<svg class="a" style="left:152.5px;top:72.34px" width="20" height="20" viewBox="0 0 20 20"><circle cx="12.5" cy="5" r="3" fill="#f8d890" stroke="#d8a850" stroke-width="0.6"/><path d="M8 13 C8 9 10 8.5 12.5 8.5 C15 8.5 17.5 9 17.5 12 V13Z" fill="#e82840" stroke="#60a060" stroke-width="0.6"/><circle cx="7" cy="9" r="3.2" fill="#f8d8b0" stroke="#b07040" stroke-width="0.6"/><path d="M7 6 C4.5 6 4 7.5 4.5 8.5 C5 7 8 7 9.5 8 C9.5 7 9 6 7 6Z" fill="#905030"/><path d="M1.5 18.5 C1.5 14 3.5 12.5 7 12.5 C10.5 12.5 12.5 14 12.5 18.5Z" fill="#e82840" stroke="#d09040" stroke-width="0.6"/></svg>
<div class="a nw" style="left:175.5px;top:69.70px;height:26px;line-height:26px;font-size:18.6px;font-family:'Liberation Serif', serif;color:#000;-webkit-text-stroke:0.15px #000">Виктория-1</div>
<div class="a nw" style="left:353.5px;top:69.70px;height:26px;line-height:26px;font-size:18.6px;font-family:'Liberation Serif', serif;color:#000;-webkit-text-stroke:0.15px #000">Химки</div>
<div class="a nw" style="left:478.5px;top:69.70px;height:26px;line-height:26px;font-size:18.6px;font-family:'Liberation Serif', serif;color:#000;-webkit-text-stroke:0.15px #000">СК «Факе...</div>
<div class="a nw" style="left:587.5px;top:69.70px;height:26px;line-height:26px;font-size:18.6px;font-family:'Liberation Serif', serif;color:#000;-webkit-text-stroke:0.15px #000">Чернова ...</div>
<div class="a nw" style="left:762.5px;top:69.70px;height:26px;line-height:26px;font-size:18.6px;font-family:'Liberation Serif', serif;color:#000;-webkit-text-stroke:0.15px #000">31,683</div>
<div class="a nw" style="left:840.5px;top:69.70px;height:26px;line-height:26px;font-size:18.6px;font-family:'Liberation Serif', serif;color:#000;-webkit-text-stroke:0.15px #000">1</div>
<div class="a nw" style="left:8.0px;top:92.12px;height:26px;line-height:26px;font-size:18.6px;font-family:'Liberation Serif', serif;color:#000;-webkit-text-stroke:0.15px #000">4</div>
<div class="a nw" style="left:41.5px;top:92.12px;height:26px;line-height:26px;font-size:18.6px;font-family:'Liberation Serif', serif;color:#000;-webkit-text-stroke:0.15px #000">Поток 1</div>
<svg class="a" style="left:135.5px;top:96.76px" width="16" height="16" viewBox="0 0 16 16"><rect x="1" y="1" width="14" height="14" fill="#fff" stroke="#7a7a7a" stroke-width="2"/><path d="M4 7.5 L7 11 L12.5 4.5" stroke="#000" stroke-width="2.2" fill="none"/></svg>
<svg class="a" style="left:152.5px;top:94.76px" width="20" height="20" viewBox="0 0 20 20"><circle cx="12.5" cy="5" r="3" fill="#f8d890" stroke="#d8a850" stroke-width="0.6"/><path d="M8 13 C8 9 10 8.5 12.5 8.5 C15 8.5 17.5 9 17.5 12 V13Z" fill="#78e070" stroke="#60a060" stroke-width="0.6"/><circle cx="7" cy="9" r="3.2" fill="#f8d8b0" stroke="#b07040" stroke-width="0.6"/><path d="M7 6 C4.5 6 4 7.5 4.5 8.5 C5 7 8 7 9.5 8 C9.5 7 9 6 7 6Z" fill="#905030"/><path d="M1.5 18.5 C1.5 14 3.5 12.5 7 12.5 C10.5 12.5 12.5 14 12.5 18.5Z" fill="#78e070" stroke="#d09040" stroke-width="0.6"/></svg>
<div class="a nw" style="left:175.5px;top:92.12px;height:26px;line-height:26px;font-size:18.6px;font-family:'Liberation Serif', serif;color:#000;-webkit-text-stroke:0.15px #000">Олимпия-С</div>
<div class="a nw" style="left:353.5px;top:92.12px;height:26px;line-height:26px;font-size:18.6px;font-family:'Liberation Serif', serif;color:#000;-webkit-text-stroke:0.15px #000">Москва</div>
<div class="a nw" style="left:478.5px;top:92.12px;height:26px;line-height:26px;font-size:18.6px;font-family:'Liberation Serif', serif;color:#000;-webkit-text-stroke:0.15px #000">СК «Соко...</div>
<div class="a nw" style="left:587.5px;top:92.12px;height:26px;line-height:26px;font-size:18.6px;font-family:'Liberation Serif', serif;color:#000;-webkit-text-stroke:0.15px #000">Игнатьев...</div>
<div class="a nw" style="left:762.5px;top:92.12px;height:26px;line-height:26px;font-size:18.6px;font-family:'Liberation Serif', serif;color:#000;-webkit-text-stroke:0.15px #000">30,617</div>
<div class="a nw" style="left:840.5px;top:92.12px;height:26px;line-height:26px;font-size:18.6px;font-family:'Liberation Serif', serif;color:#000;-webkit-text-stroke:0.15px #000">3</div>
<div class="a nw" style="left:8.0px;top:114.54px;height:26px;line-height:26px;font-size:18.6px;font-family:'Liberation Serif', serif;color:#000;-webkit-text-stroke:0.15px #000">5</div>
<div class="a nw" style="left:41.5px;top:114.54px;height:26px;line-height:26px;font-size:18.6px;font-family:'Liberation Serif', serif;color:#000;-webkit-text-stroke:0.15px #000">Поток 1</div>
<svg class="a" style="left:135.5px;top:119.18px" width="16" height="16" viewBox="0 0 16 16"><rect x="1" y="1" width="14" height="14" fill="#fff" stroke="#7a7a7a" stroke-width="2"/><path d="M4 7.5 L7 11 L12.5 4.5" stroke="#000" stroke-width="2.2" fill="none"/></svg>
<svg class="a" style="left:152.5px;top:117.18px" width="20" height="20" viewBox="0 0 20 20"><circle cx="12.5" cy="5" r="3" fill="#f8d890" stroke="#d8a850" stroke-width="0.6"/><path d="M8 13 C8 9 10 8.5 12.5 8.5 C15 8.5 17.5 9 17.5 12 V13Z" fill="#f0f040" stroke="#60a060" stroke-width="0.6"/><circle cx="7" cy="9" r="3.2" fill="#f8d8b0" stroke="#b07040" stroke-width="0.6"/><path d="M7 6 C4.5 6 4 7.5 4.5 8.5 C5 7 8 7 9.5 8 C9.5 7 9 6 7 6Z" fill="#905030"/><path d="M1.5 18.5 C1.5 14 3.5 12.5 7 12.5 C10.5 12.5 12.5 14 12.5 18.5Z" fill="#f0f040" stroke="#d09040" stroke-width="0.6"/></svg>
<div class="a nw" style="left:175.5px;top:114.54px;height:26px;line-height:26px;font-size:18.6px;font-family:'Liberation Serif', serif;color:#000;-webkit-text-stroke:0.15px #000">Миндаль-М</div>
<div class="a nw" style="left:353.5px;top:114.54px;height:26px;line-height:26px;font-size:18.6px;font-family:'Liberation Serif', serif;color:#000;-webkit-text-stroke:0.15px #000">Дмитров</div>
<div class="a nw" style="left:478.5px;top:114.54px;height:26px;line-height:26px;font-size:18.6px;font-family:'Liberation Serif', serif;color:#000;-webkit-text-stroke:0.15px #000">ЦХГ «ФУ...</div>
<div class="a nw" style="left:587.5px;top:114.54px;height:26px;line-height:26px;font-size:18.6px;font-family:'Liberation Serif', serif;color:#000;-webkit-text-stroke:0.15px #000">Петровск...</div>
<div class="a nw" style="left:762.5px;top:114.54px;height:26px;line-height:26px;font-size:18.6px;font-family:'Liberation Serif', serif;color:#000;-webkit-text-stroke:0.15px #000">31,400</div>
<div class="a nw" style="left:840.5px;top:114.54px;height:26px;line-height:26px;font-size:18.6px;font-family:'Liberation Serif', serif;color:#000;-webkit-text-stroke:0.15px #000">2</div>
</div>
<div style="position:absolute;left:541.5px;top:545.5px;width:1036px;height:20.8px;background:#f0f0f0"></div>
<div style="position:absolute;left:563px;top:546px;width:304px;height:18.5px;background:#cdcdcd"></div>
<svg class="a" style="left:547px;top:550px;" width="10" height="11" viewBox="0 0 10 11"><path d="M7.5 1.5 L3 5.5 L7.5 9.5" stroke="#606060" stroke-width="2" fill="none"/></svg>
<svg class="a" style="left:1563px;top:550px;" width="10" height="11" viewBox="0 0 10 11"><path d="M2.5 1.5 L7 5.5 L2.5 9.5" stroke="#606060" stroke-width="2" fill="none"/></svg>
<div style="position:absolute;left:540px;top:576.5px;width:1039px;height:360.5px;background:#e3e3e3;border-top:1.5px solid #8a8a8a;border-left:2px solid #8a8a8a;border-right:1px solid #fafafa;border-bottom:1px solid #fafafa"></div>
<div class="a" style="left:550.2px;top:585px;width:1018.8px;height:60.5px;border-top:1.4px solid #8a8a8a;border-left:1.4px solid #8a8a8a"></div>
<div class="a" style="left:551.90px;top:586.4px;width:111.90px;height:59px;background:#f0f0f0;border-top:1px solid #fff;border-left:1px solid #fff;border-right:2px solid #8a8a8a;border-bottom:2px solid #8a8a8a"></div>
<div class="a" style="left:665.00px;top:586.4px;width:111.90px;height:59px;background:#f0f0f0;border-top:1px solid #fff;border-left:1px solid #fff;border-right:2px solid #8a8a8a;border-bottom:2px solid #8a8a8a"></div>
<div class="a" style="left:778.10px;top:586.4px;width:111.90px;height:59px;background:#f0f0f0;border-top:1px solid #fff;border-left:1px solid #fff;border-right:2px solid #8a8a8a;border-bottom:2px solid #8a8a8a"></div>
<div class="a" style="left:891.20px;top:586.4px;width:111.90px;height:59px;background:#f0f0f0;border-top:1px solid #fff;border-left:1px solid #fff;border-right:2px solid #8a8a8a;border-bottom:2px solid #8a8a8a"></div>
<div class="a" style="left:1004.30px;top:586.4px;width:111.90px;height:59px;background:#f0f0f0;border-top:1px solid #fff;border-left:1px solid #fff;border-right:2px solid #8a8a8a;border-bottom:2px solid #8a8a8a"></div>
<div class="a" style="left:1117.40px;top:586.4px;width:111.90px;height:59px;background:#f0f0f0;border-top:1px solid #fff;border-left:1px solid #fff;border-right:2px solid #8a8a8a;border-bottom:2px solid #8a8a8a"></div>
<div class="a" style="left:1230.50px;top:586.4px;width:111.90px;height:59px;background:#f0f0f0;border-top:1px solid #fff;border-left:1px solid #fff;border-right:2px solid #8a8a8a;border-bottom:2px solid #8a8a8a"></div>
<div class="a" style="left:1343.60px;top:586.4px;width:111.90px;height:59px;background:#f0f0f0;border-top:1px solid #fff;border-left:1px solid #fff;border-right:2px solid #8a8a8a;border-bottom:2px solid #8a8a8a"></div>
<div class="a" style="left:1456.70px;top:586.4px;width:111.80px;height:59px;background:#f0f0f0;border-top:1px solid #fff;border-left:1px solid #fff;border-right:2px solid #8a8a8a;border-bottom:2px solid #8a8a8a"></div>
<div class="a nw" style="left:550.7px;top:622.98px;height:19px;line-height:19px;font-size:13.7px;font-family:'Liberation Sans', sans-serif;width:113.09999999999991px;text-align:center;color:#1e1e1e">Пред. поток</div>
<div class="a nw" style="left:663.8px;top:622.98px;height:19px;line-height:19px;font-size:13.7px;font-family:'Liberation Sans', sans-serif;width:113.10000000000002px;text-align:center;color:#1e1e1e">След. поток</div>
<div class="a nw" style="left:776.9px;top:604.18px;height:19px;line-height:19px;font-size:13.7px;font-family:'Liberation Sans', sans-serif;width:113.10000000000002px;text-align:center;color:#1e1e1e">Пред.</div>
<div class="a nw" style="left:776.9px;top:622.78px;height:19px;line-height:19px;font-size:13.7px;font-family:'Liberation Sans', sans-serif;width:113.10000000000002px;text-align:center;color:#1e1e1e">Спортсмен</div>
<div class="a nw" style="left:890px;top:604.18px;height:19px;line-height:19px;font-size:13.7px;font-family:'Liberation Sans', sans-serif;width:113.10000000000002px;text-align:center;color:#1e1e1e">След.</div>
<div class="a nw" style="left:890px;top:622.78px;height:19px;line-height:19px;font-size:13.7px;font-family:'Liberation Sans', sans-serif;width:113.10000000000002px;text-align:center;color:#1e1e1e">Спортсмен</div>
<div class="a nw" style="left:1003.1px;top:622.98px;height:19px;line-height:19px;font-size:13.7px;font-family:'Liberation Sans', sans-serif;width:113.10000000000002px;text-align:center;color:#1e1e1e">Правила</div>
<div class="a nw" style="left:1116.2px;top:622.98px;height:19px;line-height:19px;font-size:13.7px;font-family:'Liberation Sans', sans-serif;width:113.09999999999991px;text-align:center;color:#1e1e1e">Музыка</div>
<div class="a nw" style="left:1229.3px;top:622.98px;height:19px;line-height:19px;font-size:13.7px;font-family:'Liberation Sans', sans-serif;width:113.10000000000014px;text-align:center;color:#1e1e1e">Большой Экран</div>
<div class="a nw" style="left:1342.4px;top:622.98px;height:19px;line-height:19px;font-size:13.7px;font-family:'Liberation Sans', sans-serif;width:113.09999999999991px;text-align:center;color:#1e1e1e">Оценки в Excel</div>
<div class="a nw" style="left:1455.5px;top:622.98px;height:19px;line-height:19px;font-size:13.7px;font-family:'Liberation Sans', sans-serif;width:113.0px;text-align:center;color:#1e1e1e">Удалить оценки</div>
<svg class="a" style="left:599.5px;top:596px;" width="16" height="17" viewBox="0 0 16 17"><defs><linearGradient id="tg1" x1="0" y1="0" x2="0" y2="1"><stop offset="0" stop-color="#8ad0fa"/><stop offset="1" stop-color="#1a9ae8"/></linearGradient></defs><path d="M8 1 L15 8.3 H1 Z" fill="#6cc0f4" stroke="#3a88c8" stroke-width="0.6"/><path d="M8 8.6 L15 16 H1 Z" fill="url(#tg1)"/><path d="M1 15.5 H15" stroke="#0a4a90" stroke-width="1.2"/></svg>
<svg class="a" style="left:712.6px;top:596px;" width="16" height="17" viewBox="0 0 16 17"><defs><linearGradient id="tg2" x1="0" y1="0" x2="0" y2="1"><stop offset="0" stop-color="#8ad0fa"/><stop offset="1" stop-color="#1a9ae8"/></linearGradient></defs><path d="M1 1 H15 L8 8.3 Z" fill="url(#tg2)"/><path d="M1 1.5 H15" stroke="#0a4a90" stroke-width="1.2"/><path d="M1 8.6 H15 L8 16 Z" fill="#6cc0f4" stroke="#3a88c8" stroke-width="0.6"/></svg>
<svg class="a" style="left:825px;top:590.5px;" width="18" height="10" viewBox="0 0 18 10"><defs><linearGradient id="tg3" x1="0" y1="0" x2="0" y2="1"><stop offset="0" stop-color="#8ad0fa"/><stop offset="1" stop-color="#1a9ae8"/></linearGradient></defs><path d="M9 0.5 L17.5 9.3 H0.5 Z" fill="url(#tg3)"/><path d="M0.8 9 H17.2" stroke="#1a70c0" stroke-width="1"/></svg>
<svg class="a" style="left:938px;top:591.5px;" width="18" height="10" viewBox="0 0 18 10"><defs><linearGradient id="tg4" x1="0" y1="0" x2="0" y2="1"><stop offset="0" stop-color="#8ad0fa"/><stop offset="1" stop-color="#1a9ae8"/></linearGradient></defs><path d="M0.5 0.5 H17.5 L9 9.3 Z" fill="url(#tg4)"/><path d="M0.8 1 H17.2" stroke="#1a70c0" stroke-width="1"/></svg>
<svg class="a" style="left:1048.5px;top:593.5px;" width="20" height="21" viewBox="0 0 20 21"><defs><linearGradient id="bk" x1="0" y1="0" x2="1" y2="0"><stop offset="0" stop-color="#f4fcff"/><stop offset="0.5" stop-color="#c8dcdc"/><stop offset="1" stop-color="#f4fcff"/></linearGradient></defs><path d="M1.5 1.5 H6 L10 3.5 L14 1.5 H18.5 V18.5 H11.5 L10 19.5 L8.5 18.5 H1.5 Z" fill="url(#bk)" stroke="#2a4a80" stroke-width="1.6"/><path d="M10 3.5 V18.5" stroke="#a8b8b8" stroke-width="1"/><path d="M7 19.8 H13" stroke="#111" stroke-width="1.5"/></svg>
<svg class="a" style="left:1163.5px;top:593.5px;" width="18" height="21" viewBox="0 0 18 21"><path d="M6 17 V2.5 H16.5 V16.5" stroke="#4a70d0" stroke-width="1.8" fill="none"/><path d="M6 5 H16.5" stroke="#4a70d0" stroke-width="1.4"/><circle cx="3.7" cy="16.8" r="3.3" fill="#50b0f0" stroke="#2a60c0" stroke-width="0.8"/><circle cx="13.8" cy="16.8" r="3.3" fill="#50b0f0" stroke="#2a60c0" stroke-width="0.8"/></svg>
<svg class="a" style="left:1275.5px;top:595.5px;" width="21" height="19" viewBox="0 0 21 19"><defs><linearGradient id="mn" x1="0" y1="0" x2="1" y2="1"><stop offset="0" stop-color="#68b4ec"/><stop offset="0.5" stop-color="#3a8ad0"/><stop offset="1" stop-color="#70c0f8"/></linearGradient></defs><rect x="0.8" y="0.8" width="19.4" height="13.5" rx="1" fill="#111"/><rect x="2.2" y="2" width="16.6" height="9.2" fill="url(#mn)"/><rect x="1.5" y="11.8" width="18" height="2" fill="#a8a8a8"/><path d="M7.5 14.5 H13.5 V16 H16 V18 H5 V16 H7.5Z" fill="#222"/><rect x="9" y="15" width="3" height="1" fill="#bbb"/></svg>
<svg class="a" style="left:1387.5px;top:594px;" width="21" height="21" viewBox="0 0 21 21"><rect x="1" y="1" width="19" height="19" rx="1.2" fill="#d8f8d0" stroke="#3a6a4a" stroke-width="1.6"/><path d="M5 4 H9 L10.5 7.5 L12 4 H16 L12.5 10.5 L16.5 17 H12.5 L10.5 13 L8.5 17 H4.5 L8.5 10.5 Z" fill="#3a9a3a"/><path d="M9 4 L10.5 7.5 L12.5 10.5 L16.5 17 H12.5 L8.5 10.5Z" fill="#80c050"/></svg>
<svg class="a" style="left:1501px;top:596px;" width="20" height="18" viewBox="0 0 20 18"><path d="M3 16 L17 2" stroke="#c8202a" stroke-width="3.2" stroke-linecap="round"/><path d="M4 2.5 L16 15" stroke="#d83038" stroke-width="2.8" stroke-linecap="round"/></svg>
<div style="position:absolute;left:551px;top:654.5px;width:1019px;height:41.5px;background:#f0f0f0;border-top:1.5px solid #8a8a8a;border-left:1.5px solid #8a8a8a;border-right:1px solid #fafafa;border-bottom:1px solid #fafafa"></div>
<div class="a nw" style="left:565px;top:654.15px;height:21px;line-height:21px;font-size:15px;font-family:'Liberation Sans', sans-serif;width:1000px;text-align:center;color:#10108a;font-weight:bold;letter-spacing:0.1px">Созвездие, Коломна, ДСШ FD, тренер: Перова В.Ю.</div>
<div class="a nw" style="left:566.5px;top:673.75px;height:21px;line-height:21px;font-size:15px;font-family:'Liberation Sans', sans-serif;width:1000px;text-align:center;color:#10108a;font-weight:bold;letter-spacing:0.36px">Дата: 17.07.2022, 09:15-09:30 Группа: Девочки 8-10 лет (5)</div>
<div class="a" style="left:550.00px;top:704.30px;width:1021.00px;height:207.70px;background:#6e6e6e"></div>
<div class="a" style="left:553.00px;top:707.00px;width:1018.00px;height:204.00px;background:#f0f0f0"></div>
<div class="a" style="left:1571.00px;top:704.30px;width:1.30px;height:207.70px;background:#fafafa"></div>
<div class="a" style="left:553.00px;top:707.00px;width:430.30px;height:21.50px;background:#c8c8c8"></div>
<div class="a" style="left:983.30px;top:707.00px;width:82.50px;height:21.50px;background:#ff8000"></div>
<div class="a" style="left:1065.80px;top:707.00px;width:81.80px;height:21.50px;background:#00b400"></div>
<div class="a" style="left:1147.60px;top:707.00px;width:140.80px;height:21.50px;background:#00ffff"></div>
<div class="a" style="left:1288.40px;top:707.00px;width:282.60px;height:21.50px;background:#c8c8c8"></div>
<div class="a" style="left:553.00px;top:728.50px;width:61.80px;height:90.10px;background:#ffff00"></div>
<div class="a" style="left:614.80px;top:728.50px;width:40.00px;height:23.30px;background:#00e000"></div>
<div class="a" style="left:654.80px;top:728.50px;width:492.80px;height:23.30px;background:#80ff80"></div>
<div class="a" style="left:1147.60px;top:728.50px;width:140.80px;height:23.30px;background:#00ff00"></div>
<div class="a" style="left:614.80px;top:751.00px;width:40.00px;height:23.80px;background:#80ffff"></div>
<div class="a" style="left:654.80px;top:751.00px;width:492.80px;height:23.80px;background:#c0ffff"></div>
<div class="a" style="left:1147.60px;top:751.00px;width:140.80px;height:23.80px;background:#80ffff"></div>
<div class="a" style="left:614.80px;top:774.00px;width:40.00px;height:23.30px;background:#80ffff"></div>
<div class="a" style="left:654.80px;top:774.00px;width:492.80px;height:23.30px;background:#c0ffff"></div>
<div class="a" style="left:1147.60px;top:774.00px;width:140.80px;height:23.30px;background:#80ffff"></div>
<div class="a" style="left:614.80px;top:796.50px;width:40.00px;height:22.10px;background:#ffc080"></div>
<div class="a" style="left:654.80px;top:796.50px;width:492.80px;height:22.10px;background:#ffe0c0"></div>
<div class="a" style="left:1147.60px;top:796.50px;width:140.80px;height:22.10px;background:#ffc080"></div>
<div class="a" style="left:553.00px;top:822.00px;width:61.80px;height:89.00px;background:#ffffff"></div>
<div class="a" style="left:614.80px;top:822.00px;width:40.00px;height:23.00px;background:#00e000"></div>
<div class="a" style="left:654.80px;top:822.00px;width:492.80px;height:23.00px;background:#80ff80"></div>
<div class="a" style="left:1147.60px;top:822.00px;width:140.80px;height:23.00px;background:#00ff00"></div>
<div class="a" style="left:614.80px;top:844.20px;width:40.00px;height:23.10px;background:#80ffff"></div>
<div class="a" style="left:654.80px;top:844.20px;width:492.80px;height:23.10px;background:#c0ffff"></div>
<div class="a" style="left:1147.60px;top:844.20px;width:140.80px;height:23.10px;background:#80ffff"></div>
<div class="a" style="left:614.80px;top:866.50px;width:40.00px;height:22.90px;background:#80ffff"></div>
<div class="a" style="left:654.80px;top:866.50px;width:492.80px;height:22.90px;background:#c0ffff"></div>
<div class="a" style="left:1147.60px;top:866.50px;width:140.80px;height:22.90px;background:#80ffff"></div>
<div class="a" style="left:614.80px;top:888.60px;width:40.00px;height:22.40px;background:#ffc080"></div>
<div class="a" style="left:654.80px;top:888.60px;width:492.80px;height:22.40px;background:#ffe0c0"></div>
<div class="a" style="left:1147.60px;top:888.60px;width:140.80px;height:22.40px;background:#ffc080"></div>
<div class="a" style="left:555.00px;top:860.00px;width:54.00px;height:15.00px;background:#f0f0f0"></div>
<div class="a" style="left:653.80px;top:707.00px;width:2.00px;height:204.00px;background:#6e6e6e"></div>
<div class="a" style="left:735.80px;top:707.00px;width:2.00px;height:204.00px;background:#6e6e6e"></div>
<div class="a" style="left:817.80px;top:707.00px;width:2.00px;height:204.00px;background:#6e6e6e"></div>
<div class="a" style="left:899.40px;top:707.00px;width:2.00px;height:204.00px;background:#6e6e6e"></div>
<div class="a" style="left:982.30px;top:707.00px;width:2.00px;height:204.00px;background:#6e6e6e"></div>
<div class="a" style="left:1064.80px;top:707.00px;width:2.00px;height:204.00px;background:#6e6e6e"></div>
<div class="a" style="left:1146.60px;top:707.00px;width:2.00px;height:204.00px;background:#6e6e6e"></div>
<div class="a" style="left:1287.40px;top:707.00px;width:2.00px;height:204.00px;background:#6e6e6e"></div>
<div class="a" style="left:1358.60px;top:707.00px;width:2.00px;height:204.00px;background:#6e6e6e"></div>
<div class="a" style="left:1429.80px;top:707.00px;width:2.00px;height:204.00px;background:#6e6e6e"></div>
<div class="a" style="left:1500.80px;top:707.00px;width:2.00px;height:204.00px;background:#6e6e6e"></div>
<div class="a" style="left:613.80px;top:728.50px;width:2.00px;height:182.50px;background:#6e6e6e"></div>
<div class="a" style="left:1217.50px;top:751.00px;width:2.00px;height:45.50px;background:#6e6e6e"></div>
<div class="a" style="left:1217.50px;top:844.20px;width:2.00px;height:44.40px;background:#6e6e6e"></div>
<div class="a" style="left:553.00px;top:727.80px;width:1018.00px;height:1.60px;background:#6e6e6e"></div>
<div class="a" style="left:614.80px;top:750.20px;width:673.60px;height:1.60px;background:#6e6e6e"></div>
<div class="a" style="left:614.80px;top:795.70px;width:673.60px;height:1.60px;background:#6e6e6e"></div>
<div class="a" style="left:614.80px;top:773.20px;width:603.70px;height:1.60px;background:#6e6e6e"></div>
<div class="a" style="left:614.80px;top:843.40px;width:673.60px;height:1.60px;background:#6e6e6e"></div>
<div class="a" style="left:614.80px;top:887.80px;width:673.60px;height:1.60px;background:#6e6e6e"></div>
<div class="a" style="left:614.80px;top:865.70px;width:603.70px;height:1.60px;background:#6e6e6e"></div>
<div class="a" style="left:553.00px;top:818.60px;width:877.80px;height:1.60px;background:#6e6e6e"></div>
<div class="a" style="left:553.00px;top:820.20px;width:877.80px;height:1.00px;background:#f4f4f4"></div>
<div class="a" style="left:553.00px;top:821.20px;width:877.80px;height:1.20px;background:#6e6e6e"></div>
<div class="a" style="left:614.5px;top:727.8px;width:675px;height:23.6px;border:3px solid #0a14d8"></div>
<div class="a nw" style="left:553px;top:707.39px;height:23px;line-height:23px;font-size:16.4px;font-family:'Liberation Sans', sans-serif;color:#10107a;font-weight:bold;letter-spacing:0.55px">Этап</div>
<div class="a nw" style="left:653.3px;top:705.29px;height:25px;line-height:25px;font-size:17.6px;font-family:'Liberation Sans', sans-serif;width:82.0px;text-align:center;color:#10107a;font-weight:bold">1</div>
<div class="a nw" style="left:735.3px;top:705.29px;height:25px;line-height:25px;font-size:17.6px;font-family:'Liberation Sans', sans-serif;width:82.0px;text-align:center;color:#10107a;font-weight:bold">2</div>
<div class="a nw" style="left:817.3px;top:705.29px;height:25px;line-height:25px;font-size:17.6px;font-family:'Liberation Sans', sans-serif;width:81.60000000000002px;text-align:center;color:#10107a;font-weight:bold">3</div>
<div class="a nw" style="left:898.9px;top:705.29px;height:25px;line-height:25px;font-size:17.6px;font-family:'Liberation Sans', sans-serif;width:82.89999999999998px;text-align:center;color:#10107a;font-weight:bold">4</div>
<div class="a nw" style="left:983.3px;top:705.46px;height:24px;line-height:24px;font-size:16.8px;font-family:'Liberation Sans', sans-serif;width:82.5px;text-align:center;color:#1a1a60;letter-spacing:0.45px">Сбавка</div>
<div class="a nw" style="left:1065.8px;top:705.46px;height:24px;line-height:24px;font-size:16.8px;font-family:'Liberation Sans', sans-serif;width:81.79999999999995px;text-align:center;color:#1a1a60;letter-spacing:0.45px">Бонус</div>
<div class="a nw" style="left:1147.6px;top:705.46px;height:24px;line-height:24px;font-size:16.8px;font-family:'Liberation Sans', sans-serif;width:140.80000000000018px;text-align:center;color:#1a1a80;letter-spacing:0.45px">Итоги</div>
<div class="a nw" style="left:1288.4px;top:705.46px;height:24px;line-height:24px;font-size:16.8px;font-family:'Liberation Sans', sans-serif;width:71.19999999999982px;text-align:center;color:#1a1a80;letter-spacing:0.45px">Сумма</div>
<div class="a nw" style="left:1359.6px;top:705.46px;height:24px;line-height:24px;font-size:16.8px;font-family:'Liberation Sans', sans-serif;width:71.20000000000005px;text-align:center;color:#1a1a80;letter-spacing:0.45px">Место</div>
<div class="a nw" style="left:1430.8px;top:705.46px;height:24px;line-height:24px;font-size:16.8px;font-family:'Liberation Sans', sans-serif;width:71.0px;text-align:center;color:#1a1a80;letter-spacing:0.45px">Всего</div>
<div class="a nw" style="left:1501.8px;top:705.46px;height:24px;line-height:24px;font-size:16.8px;font-family:'Liberation Sans', sans-serif;width:69.20000000000005px;text-align:center;color:#1a1a80;letter-spacing:0.45px">Место</div>
<div class="a nw" style="left:551px;top:764.22px;height:20px;line-height:20px;font-size:14.5px;font-family:'Liberation Sans', sans-serif;width:63.799999999999955px;text-align:center;color:#ff3800">ПРЕД</div>
<div class="a nw" style="left:551px;top:858.22px;height:20px;line-height:20px;font-size:14.5px;font-family:'Liberation Sans', sans-serif;width:63.799999999999955px;text-align:center;color:#111">ФИНАЛ</div>
<div class="a nw" style="left:622px;top:728.15px;height:22px;line-height:22px;font-size:15.6px;font-family:'Liberation Sans', sans-serif;color:#111;letter-spacing:-0.3px;transform:scaleX(0.84);transform-origin:0 50%">ТЦ</div>
<div class="a nw" style="left:654.8px;top:728.15px;height:22px;line-height:22px;font-size:15.6px;font-family:'Liberation Sans', sans-serif;width:82.0px;text-align:center;color:#1a1a1a;transform:scaleX(0.86)">3.400</div>
<div class="a nw" style="left:736.8px;top:728.15px;height:22px;line-height:22px;font-size:15.6px;font-family:'Liberation Sans', sans-serif;width:82.0px;text-align:center;color:#1a1a1a;transform:scaleX(0.86)">3.400</div>
<div class="a nw" style="left:818.8px;top:728.15px;height:22px;line-height:22px;font-size:15.6px;font-family:'Liberation Sans', sans-serif;width:81.60000000000002px;text-align:center;color:#1a1a1a;transform:scaleX(0.86)">3.500</div>
<div class="a nw" style="left:619px;top:751.15px;height:22px;line-height:22px;font-size:15.6px;font-family:'Liberation Sans', sans-serif;color:#10107a;letter-spacing:-0.3px;transform:scaleX(0.84);transform-origin:0 50%">АЦ-А</div>
<div class="a nw" style="left:654.8px;top:751.15px;height:22px;line-height:22px;font-size:15.6px;font-family:'Liberation Sans', sans-serif;width:82.0px;text-align:center;color:#1a1a1a;transform:scaleX(0.86)">2.700</div>
<div class="a nw" style="left:736.8px;top:751.15px;height:22px;line-height:22px;font-size:15.6px;font-family:'Liberation Sans', sans-serif;width:82.0px;text-align:center;color:#1a1a1a;transform:scaleX(0.86)">2.900</div>
<div class="a nw" style="left:818.8px;top:751.15px;height:22px;line-height:22px;font-size:15.6px;font-family:'Liberation Sans', sans-serif;width:81.60000000000002px;text-align:center;color:#1a1a1a;transform:scaleX(0.86)">2.800</div>
<div class="a nw" style="left:619px;top:773.65px;height:22px;line-height:22px;font-size:15.6px;font-family:'Liberation Sans', sans-serif;color:#10107a;letter-spacing:-0.3px;transform:scaleX(0.84);transform-origin:0 50%">АЦ-В</div>
<div class="a nw" style="left:654.8px;top:773.65px;height:22px;line-height:22px;font-size:15.6px;font-family:'Liberation Sans', sans-serif;width:82.0px;text-align:center;color:#1a1a1a;transform:scaleX(0.86)">2.500</div>
<div class="a nw" style="left:736.8px;top:773.65px;height:22px;line-height:22px;font-size:15.6px;font-family:'Liberation Sans', sans-serif;width:82.0px;text-align:center;color:#1a1a1a;transform:scaleX(0.86)">2.600</div>
<div class="a nw" style="left:818.8px;top:773.65px;height:22px;line-height:22px;font-size:15.6px;font-family:'Liberation Sans', sans-serif;width:81.60000000000002px;text-align:center;color:#1a1a1a;transform:scaleX(0.86)">2.700</div>
<div class="a nw" style="left:619px;top:795.75px;height:22px;line-height:22px;font-size:15.6px;font-family:'Liberation Sans', sans-serif;color:#10107a;letter-spacing:-0.3px;transform:scaleX(0.84);transform-origin:0 50%">ИСП</div>
<div class="a nw" style="left:654.8px;top:795.75px;height:22px;line-height:22px;font-size:15.6px;font-family:'Liberation Sans', sans-serif;width:82.0px;text-align:center;color:#1a1a1a;transform:scaleX(0.86)">6.200</div>
<div class="a nw" style="left:736.8px;top:795.75px;height:22px;line-height:22px;font-size:15.6px;font-family:'Liberation Sans', sans-serif;width:82.0px;text-align:center;color:#1a1a1a;transform:scaleX(0.86)">6.000</div>
<div class="a nw" style="left:818.8px;top:795.75px;height:22px;line-height:22px;font-size:15.6px;font-family:'Liberation Sans', sans-serif;width:81.60000000000002px;text-align:center;color:#1a1a1a;transform:scaleX(0.86)">6.150</div>
<div class="a nw" style="left:983.3px;top:773.65px;height:22px;line-height:22px;font-size:15.6px;font-family:'Liberation Sans', sans-serif;width:82.5px;text-align:center;color:#1a1a1a;transform:scaleX(0.86)">0.100</div>
<div class="a nw" style="left:1065.8px;top:773.65px;height:22px;line-height:22px;font-size:15.6px;font-family:'Liberation Sans', sans-serif;width:81.79999999999995px;text-align:center;color:#1a1a1a;transform:scaleX(0.86)">0.200</div>
<div class="a nw" style="left:1147.6px;top:729.12px;height:21px;line-height:21px;font-size:14.8px;font-family:'Liberation Sans', sans-serif;width:138.70000000000005px;text-align:right;color:#10107a;font-weight:bold;letter-spacing:0.8px">3,433</div>
<div class="a nw" style="left:1147.6px;top:751.12px;height:21px;line-height:21px;font-size:14.8px;font-family:'Liberation Sans', sans-serif;width:70.90000000000009px;text-align:center;color:#10107a;font-weight:bold;letter-spacing:0.8px">2,800</div>
<div class="a nw" style="left:1147.6px;top:773.62px;height:21px;line-height:21px;font-size:14.8px;font-family:'Liberation Sans', sans-serif;width:70.90000000000009px;text-align:center;color:#10107a;font-weight:bold;letter-spacing:0.8px">2,700</div>
<div class="a nw" style="left:1218.5px;top:763.87px;height:21px;line-height:21px;font-size:14.8px;font-family:'Liberation Sans', sans-serif;width:67.79999999999995px;text-align:right;color:#10107a;font-weight:bold;letter-spacing:0.8px">5,500</div>
<div class="a nw" style="left:1147.6px;top:796.22px;height:21px;line-height:21px;font-size:14.8px;font-family:'Liberation Sans', sans-serif;width:138.70000000000005px;text-align:right;color:#10107a;font-weight:bold;letter-spacing:0.8px">6,117</div>
<div class="a nw" style="left:1288.4px;top:763.00px;height:22px;line-height:22px;font-size:15.6px;font-family:'Liberation Sans', sans-serif;width:71.19999999999982px;text-align:center;color:#10107a;font-weight:bold;letter-spacing:1.5px;text-indent:1.5px">15,050</div>
<div class="a nw" style="left:1359.6px;top:765.01px;height:24px;line-height:24px;font-size:16.8px;font-family:'Liberation Sans', sans-serif;width:71.20000000000005px;text-align:center;color:#10107a;font-weight:bold;transform:scaleX(1.35)">4</div>
<div class="a nw" style="left:622px;top:821.35px;height:22px;line-height:22px;font-size:15.6px;font-family:'Liberation Sans', sans-serif;color:#111;letter-spacing:-0.3px;transform:scaleX(0.84);transform-origin:0 50%">ТЦ</div>
<div class="a nw" style="left:654.8px;top:821.35px;height:22px;line-height:22px;font-size:15.6px;font-family:'Liberation Sans', sans-serif;width:82.0px;text-align:center;color:#1a1a1a;transform:scaleX(0.86)">3.500</div>
<div class="a nw" style="left:736.8px;top:821.35px;height:22px;line-height:22px;font-size:15.6px;font-family:'Liberation Sans', sans-serif;width:82.0px;text-align:center;color:#1a1a1a;transform:scaleX(0.86)">3.500</div>
<div class="a nw" style="left:818.8px;top:821.35px;height:22px;line-height:22px;font-size:15.6px;font-family:'Liberation Sans', sans-serif;width:81.60000000000002px;text-align:center;color:#1a1a1a;transform:scaleX(0.86)">3.400</div>
<div class="a nw" style="left:619px;top:843.65px;height:22px;line-height:22px;font-size:15.6px;font-family:'Liberation Sans', sans-serif;color:#10107a;letter-spacing:-0.3px;transform:scaleX(0.84);transform-origin:0 50%">АЦ-А</div>
<div class="a nw" style="left:654.8px;top:843.65px;height:22px;line-height:22px;font-size:15.6px;font-family:'Liberation Sans', sans-serif;width:82.0px;text-align:center;color:#1a1a1a;transform:scaleX(0.86)">2.800</div>
<div class="a nw" style="left:736.8px;top:843.65px;height:22px;line-height:22px;font-size:15.6px;font-family:'Liberation Sans', sans-serif;width:82.0px;text-align:center;color:#1a1a1a;transform:scaleX(0.86)">2.800</div>
<div class="a nw" style="left:818.8px;top:843.65px;height:22px;line-height:22px;font-size:15.6px;font-family:'Liberation Sans', sans-serif;width:81.60000000000002px;text-align:center;color:#1a1a1a;transform:scaleX(0.86)">2.800</div>
<div class="a nw" style="left:619px;top:865.75px;height:22px;line-height:22px;font-size:15.6px;font-family:'Liberation Sans', sans-serif;color:#10107a;letter-spacing:-0.3px;transform:scaleX(0.84);transform-origin:0 50%">АЦ-В</div>
<div class="a nw" style="left:654.8px;top:865.75px;height:22px;line-height:22px;font-size:15.6px;font-family:'Liberation Sans', sans-serif;width:82.0px;text-align:center;color:#1a1a1a;transform:scaleX(0.86)">2.100</div>
<div class="a nw" style="left:736.8px;top:865.75px;height:22px;line-height:22px;font-size:15.6px;font-family:'Liberation Sans', sans-serif;width:82.0px;text-align:center;color:#1a1a1a;transform:scaleX(0.86)">2.200</div>
<div class="a nw" style="left:818.8px;top:865.75px;height:22px;line-height:22px;font-size:15.6px;font-family:'Liberation Sans', sans-serif;width:81.60000000000002px;text-align:center;color:#1a1a1a;transform:scaleX(0.86)">2.300</div>
<div class="a nw" style="left:619px;top:888.15px;height:22px;line-height:22px;font-size:15.6px;font-family:'Liberation Sans', sans-serif;color:#10107a;letter-spacing:-0.3px;transform:scaleX(0.84);transform-origin:0 50%">ИСП</div>
<div class="a nw" style="left:654.8px;top:888.15px;height:22px;line-height:22px;font-size:15.6px;font-family:'Liberation Sans', sans-serif;width:82.0px;text-align:center;color:#1a1a1a;transform:scaleX(0.86)">6.200</div>
<div class="a nw" style="left:736.8px;top:888.15px;height:22px;line-height:22px;font-size:15.6px;font-family:'Liberation Sans', sans-serif;width:82.0px;text-align:center;color:#1a1a1a;transform:scaleX(0.86)">6.000</div>
<div class="a nw" style="left:818.8px;top:888.15px;height:22px;line-height:22px;font-size:15.6px;font-family:'Liberation Sans', sans-serif;width:81.60000000000002px;text-align:center;color:#1a1a1a;transform:scaleX(0.86)">6.100</div>
<div class="a nw" style="left:983.3px;top:865.75px;height:22px;line-height:22px;font-size:15.6px;font-family:'Liberation Sans', sans-serif;width:82.5px;text-align:center;color:#1a1a1a;transform:scaleX(0.86)">0.300</div>
<div class="a nw" style="left:1065.8px;top:865.75px;height:22px;line-height:22px;font-size:15.6px;font-family:'Liberation Sans', sans-serif;width:81.79999999999995px;text-align:center;color:#1a1a1a;transform:scaleX(0.86)">0.400</div>
<div class="a nw" style="left:1147.6px;top:822.32px;height:21px;line-height:21px;font-size:14.8px;font-family:'Liberation Sans', sans-serif;width:138.70000000000005px;text-align:right;color:#10107a;font-weight:bold;letter-spacing:0.8px">3,467</div>
<div class="a nw" style="left:1147.6px;top:843.62px;height:21px;line-height:21px;font-size:14.8px;font-family:'Liberation Sans', sans-serif;width:70.90000000000009px;text-align:center;color:#10107a;font-weight:bold;letter-spacing:0.8px">2,800</div>
<div class="a nw" style="left:1147.6px;top:865.72px;height:21px;line-height:21px;font-size:14.8px;font-family:'Liberation Sans', sans-serif;width:70.90000000000009px;text-align:center;color:#10107a;font-weight:bold;letter-spacing:0.8px">2,300</div>
<div class="a nw" style="left:1218.5px;top:856.52px;height:21px;line-height:21px;font-size:14.8px;font-family:'Liberation Sans', sans-serif;width:67.79999999999995px;text-align:right;color:#10107a;font-weight:bold;letter-spacing:0.8px">5,100</div>
<div class="a nw" style="left:1147.6px;top:888.62px;height:21px;line-height:21px;font-size:14.8px;font-family:'Liberation Sans', sans-serif;width:138.70000000000005px;text-align:right;color:#10107a;font-weight:bold;letter-spacing:0.8px">6,100</div>
<div class="a nw" style="left:1288.4px;top:855.95px;height:22px;line-height:22px;font-size:15.6px;font-family:'Liberation Sans', sans-serif;width:71.19999999999982px;text-align:center;color:#10107a;font-weight:bold;letter-spacing:1.5px;text-indent:1.5px">14,667</div>
<div class="a nw" style="left:1359.6px;top:857.96px;height:24px;line-height:24px;font-size:16.8px;font-family:'Liberation Sans', sans-serif;width:71.20000000000005px;text-align:center;color:#10107a;font-weight:bold;transform:scaleX(1.35)">5</div>
<div class="a nw" style="left:1430.8px;top:808.15px;height:22px;line-height:22px;font-size:15.6px;font-family:'Liberation Sans', sans-serif;width:71.0px;text-align:center;color:#10107a;font-weight:bold;letter-spacing:1.5px;text-indent:1.5px">29,717</div>
<div class="a nw" style="left:1501.8px;top:810.26px;height:24px;line-height:24px;font-size:16.8px;font-family:'Liberation Sans', sans-serif;width:69.20000000000005px;text-align:center;color:#10107a;font-weight:bold;transform:scaleX(1.35)">4</div>
<div class="a" style="left:550.00px;top:912.50px;width:1021.00px;height:3.50px;background:#eaeaea"></div>
<div class="a" style="left:553.00px;top:916.00px;width:1018.00px;height:1.00px;background:#fafafa"></div>
<div class="a" style="left:550.00px;top:912.00px;width:2.50px;height:3.50px;background:#8a8a8a"></div>
<svg class="a" style="left:549px;top:918.5px" width="15" height="15" viewBox="0 0 15 15"><rect x="0" y="0" width="15" height="15" fill="#fff"/><path d="M0 0.75 H14.25 M0.75 0 V15" stroke="#8a8a8a" stroke-width="1.5"/><path d="M3 7 L6 10.5 L12 3.5" stroke="#000" stroke-width="2.2" fill="none"/></svg>
<div class="a nw" style="left:572px;top:917.65px;height:21px;line-height:21px;font-size:15.3px;font-family:'Liberation Sans', sans-serif;color:#e82a38;transform:scaleY(1.12);transform-origin:0 79%">Сообщать о недопустимой разнице оценок</div>
<div style="position:absolute;left:3px;top:940.5px;width:1424px;height:20px;background:#f0f0f0;border-top:1.5px solid #9a9a9a;border-left:1.5px solid #9a9a9a;border-right:1px solid #fff;border-bottom:1px solid #fff"></div>
<div class="a nw" style="left:7px;top:941.50px;height:19px;line-height:19px;font-size:13.65px;font-family:'Liberation Sans', sans-serif;color:#111;transform:scaleY(1.13);transform-origin:0 78%">Эстетическая гимнастика Демо 17.07.2022 - 17.07.2022, Химки, СК "Родина", улица Папанина, 4А, Амелина Татьяна Александровна, +7 999 888 77 66, mymail@yandex.ru</div>
<div style="position:absolute;left:1429.5px;top:940.5px;width:82px;height:20px;background:#f0f0f0;border-top:1.5px solid #9a9a9a;border-left:1.5px solid #9a9a9a;border-right:1px solid #fff;border-bottom:1px solid #fff"></div>
<div class="a nw" style="left:1429.5px;top:941.50px;height:19px;line-height:19px;font-size:13.65px;font-family:'Liberation Sans', sans-serif;width:82px;text-align:center;color:#111">01.10.2022</div>
<div style="position:absolute;left:1515px;top:940.5px;width:46.5px;height:20px;background:#f0f0f0;border-top:1.5px solid #9a9a9a;border-left:1.5px solid #9a9a9a;border-right:1px solid #fff;border-bottom:1px solid #fff"></div>
<div class="a nw" style="left:1515px;top:941.50px;height:19px;line-height:19px;font-size:13.65px;font-family:'Liberation Sans', sans-serif;width:46.5px;text-align:center;color:#111">13:37</div>
<svg class="a" style="left:1570px;top:944px;" width="16" height="16" viewBox="0 0 16 16"><path d="M15 3 L3 15 M15 8 L8 15 M15 13 L13 15" stroke="#a8b0b8" stroke-width="1.3"/></svg>
<div style="position:absolute;left:0px;top:963.5px;width:1590px;height:1.5px;background:#5a5a5a"></div></body></html>
